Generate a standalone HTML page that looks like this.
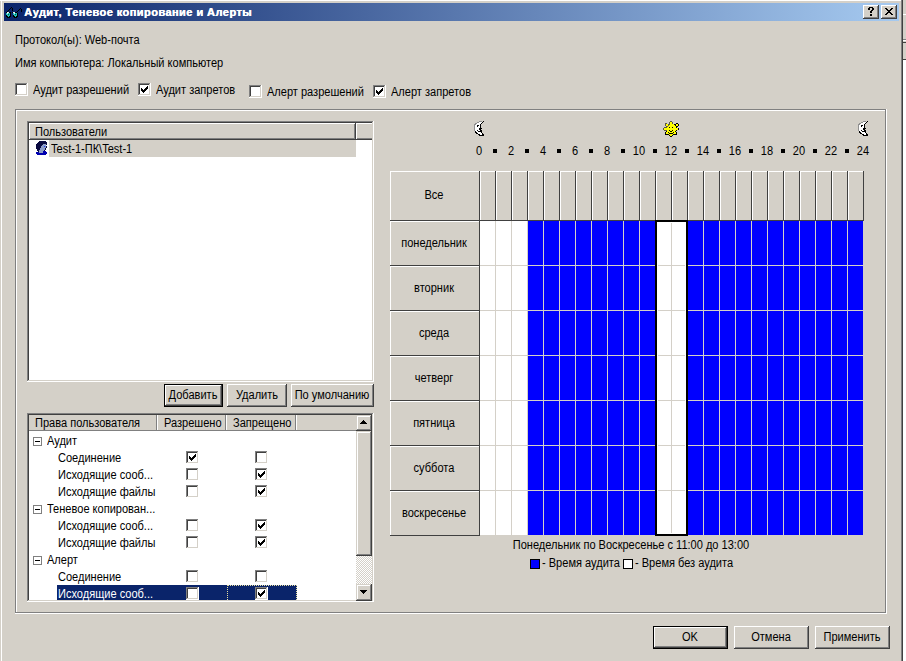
<!DOCTYPE html><html><head><meta charset="utf-8"><style>
html,body{margin:0;padding:0;}
body{width:906px;height:661px;overflow:hidden;position:relative;background:#d4d0c8;font-family:"Liberation Sans",sans-serif;font-size:11px;color:#000;}
.a{position:absolute;}
.t{position:absolute;white-space:nowrap;line-height:13px;font-size:12px;transform:scaleX(0.92);transform-origin:0 0;}
.c{transform-origin:200px 0;}
</style></head><body>
<div class="a" style="left:0px;top:0px;width:906px;height:661px;background:#d4d0c8;"></div>
<div class="a" style="left:0px;top:0px;width:901px;height:1px;background:#ffffff;"></div>
<div class="a" style="left:1px;top:0px;width:1px;height:661px;background:#ffffff;"></div>
<div class="a" style="left:901px;top:0px;width:1px;height:661px;background:#808080;"></div>
<div class="a" style="left:902px;top:0px;width:1px;height:661px;background:#404040;"></div>
<div class="a" style="left:903px;top:0px;width:3px;height:661px;background:#d4d0c8;"></div>
<div class="a" style="left:903px;top:14px;width:3px;height:1px;background:#ffffff;"></div>
<div class="a" style="left:903px;top:39px;width:3px;height:1px;background:#808080;"></div>
<div class="a" style="left:903px;top:40px;width:3px;height:1px;background:#ffffff;"></div>
<div class="a" style="left:903px;top:42px;width:3px;height:1px;background:#404040;"></div>
<div class="a" style="left:903px;top:59px;width:3px;height:1px;background:#404040;"></div>
<div class="a" style="left:903px;top:60px;width:3px;height:601px;background:#ffffff;"></div>
<div class="a" style="left:4px;top:3px;width:895px;height:18px;background:linear-gradient(to right,#0a246a,#a6caf0);"></div>
<svg class="a" style="left:6px;top:7px" width="16" height="11" shape-rendering="crispEdges"><rect x="5" y="0" width="1" height="1" fill="#000"/><rect x="4" y="1" width="1" height="1" fill="#000"/><rect x="6" y="1" width="1" height="1" fill="#000"/><rect x="14" y="1" width="1" height="1" fill="#000"/><rect x="3" y="2" width="1" height="1" fill="#000"/><rect x="6" y="2" width="1" height="1" fill="#000"/><rect x="13" y="2" width="1" height="1" fill="#000"/><rect x="15" y="2" width="1" height="1" fill="#000"/><rect x="2" y="3" width="1" height="1" fill="#000"/><rect x="6" y="3" width="1" height="1" fill="#000"/><rect x="12" y="3" width="1" height="1" fill="#000"/><rect x="15" y="3" width="1" height="1" fill="#000"/><rect x="1" y="4" width="1" height="1" fill="#000"/><rect x="11" y="4" width="1" height="1" fill="#000"/><rect x="15" y="4" width="1" height="1" fill="#000"/><rect x="0" y="5" width="1" height="1" fill="#000"/><rect x="1" y="5" width="1" height="1" fill="#e0f0f0"/><rect x="2" y="5" width="1" height="1" fill="#e0f0f0"/><rect x="3" y="5" width="1" height="1" fill="#000"/><rect x="4" y="5" width="1" height="1" fill="#000"/><rect x="6" y="5" width="1" height="1" fill="#000"/><rect x="7" y="5" width="1" height="1" fill="#e0f0f0"/><rect x="8" y="5" width="1" height="1" fill="#e0f0f0"/><rect x="9" y="5" width="1" height="1" fill="#000"/><rect x="10" y="5" width="1" height="1" fill="#000"/><rect x="0" y="6" width="1" height="1" fill="#20c0c0"/><rect x="1" y="6" width="1" height="1" fill="#e0f0f0"/><rect x="2" y="6" width="1" height="1" fill="#20c0c0"/><rect x="3" y="6" width="1" height="1" fill="#20c0c0"/><rect x="4" y="6" width="1" height="1" fill="#000"/><rect x="7" y="6" width="1" height="1" fill="#20c0c0"/><rect x="8" y="6" width="1" height="1" fill="#e0f0f0"/><rect x="9" y="6" width="1" height="1" fill="#20c0c0"/><rect x="10" y="6" width="1" height="1" fill="#20c0c0"/><rect x="11" y="6" width="1" height="1" fill="#000"/><rect x="0" y="7" width="1" height="1" fill="#20c0c0"/><rect x="1" y="7" width="1" height="1" fill="#20c0c0"/><rect x="2" y="7" width="1" height="1" fill="#006040"/><rect x="3" y="7" width="1" height="1" fill="#20c0c0"/><rect x="4" y="7" width="1" height="1" fill="#000"/><rect x="7" y="7" width="1" height="1" fill="#20c0c0"/><rect x="8" y="7" width="1" height="1" fill="#20c0c0"/><rect x="9" y="7" width="1" height="1" fill="#006040"/><rect x="10" y="7" width="1" height="1" fill="#20c0c0"/><rect x="11" y="7" width="1" height="1" fill="#000"/><rect x="0" y="8" width="1" height="1" fill="#000"/><rect x="1" y="8" width="1" height="1" fill="#20c0c0"/><rect x="2" y="8" width="1" height="1" fill="#20c0c0"/><rect x="3" y="8" width="1" height="1" fill="#20c0c0"/><rect x="4" y="8" width="1" height="1" fill="#000"/><rect x="7" y="8" width="1" height="1" fill="#000"/><rect x="8" y="8" width="1" height="1" fill="#20c0c0"/><rect x="9" y="8" width="1" height="1" fill="#20c0c0"/><rect x="10" y="8" width="1" height="1" fill="#20c0c0"/><rect x="11" y="8" width="1" height="1" fill="#000"/><rect x="0" y="9" width="1" height="1" fill="#000"/><rect x="1" y="9" width="1" height="1" fill="#000"/><rect x="2" y="9" width="1" height="1" fill="#20c0c0"/><rect x="3" y="9" width="1" height="1" fill="#000"/><rect x="4" y="9" width="1" height="1" fill="#000"/><rect x="7" y="9" width="1" height="1" fill="#000"/><rect x="8" y="9" width="1" height="1" fill="#000"/><rect x="9" y="9" width="1" height="1" fill="#20c0c0"/><rect x="10" y="9" width="1" height="1" fill="#000"/><rect x="11" y="9" width="1" height="1" fill="#000"/><rect x="1" y="10" width="1" height="1" fill="#000"/><rect x="2" y="10" width="1" height="1" fill="#000"/><rect x="3" y="10" width="1" height="1" fill="#000"/><rect x="8" y="10" width="1" height="1" fill="#000"/><rect x="9" y="10" width="1" height="1" fill="#000"/><rect x="10" y="10" width="1" height="1" fill="#000"/></svg>
<div class="t" style="left:24px;top:6px;color:#fff;font-weight:bold;letter-spacing:0.45px;text-shadow:0.5px 0 0 #fff;font-size:11px;transform:none;">Аудит, Теневое копирование и Алерты</div>
<div class="a" style="left:863px;top:5px;width:16px;height:14px;background:#d4d0c8;"></div>
<div class="a" style="left:863px;top:5px;width:16px;height:1px;background:#ffffff;"></div>
<div class="a" style="left:863px;top:5px;width:1px;height:14px;background:#ffffff;"></div>
<div class="a" style="left:863px;top:18px;width:16px;height:1px;background:#404040;"></div>
<div class="a" style="left:878px;top:5px;width:1px;height:14px;background:#404040;"></div>
<div class="a" style="left:864px;top:17px;width:14px;height:1px;background:#808080;"></div>
<div class="a" style="left:877px;top:6px;width:1px;height:12px;background:#808080;"></div>
<svg class="a" style="left:868px;top:7px" width="6" height="9" shape-rendering="crispEdges"><rect x="1" y="0" width="1" height="1" fill="#000"/><rect x="2" y="0" width="1" height="1" fill="#000"/><rect x="3" y="0" width="1" height="1" fill="#000"/><rect x="4" y="0" width="1" height="1" fill="#000"/><rect x="0" y="1" width="1" height="1" fill="#000"/><rect x="1" y="1" width="1" height="1" fill="#000"/><rect x="4" y="1" width="1" height="1" fill="#000"/><rect x="5" y="1" width="1" height="1" fill="#000"/><rect x="0" y="2" width="1" height="1" fill="#000"/><rect x="1" y="2" width="1" height="1" fill="#000"/><rect x="4" y="2" width="1" height="1" fill="#000"/><rect x="5" y="2" width="1" height="1" fill="#000"/><rect x="3" y="3" width="1" height="1" fill="#000"/><rect x="4" y="3" width="1" height="1" fill="#000"/><rect x="2" y="4" width="1" height="1" fill="#000"/><rect x="3" y="4" width="1" height="1" fill="#000"/><rect x="2" y="5" width="1" height="1" fill="#000"/><rect x="3" y="5" width="1" height="1" fill="#000"/><rect x="2" y="7" width="1" height="1" fill="#000"/><rect x="3" y="7" width="1" height="1" fill="#000"/><rect x="2" y="8" width="1" height="1" fill="#000"/><rect x="3" y="8" width="1" height="1" fill="#000"/></svg>
<div class="a" style="left:881px;top:5px;width:16px;height:14px;background:#d4d0c8;"></div>
<div class="a" style="left:881px;top:5px;width:16px;height:1px;background:#ffffff;"></div>
<div class="a" style="left:881px;top:5px;width:1px;height:14px;background:#ffffff;"></div>
<div class="a" style="left:881px;top:18px;width:16px;height:1px;background:#404040;"></div>
<div class="a" style="left:896px;top:5px;width:1px;height:14px;background:#404040;"></div>
<div class="a" style="left:882px;top:17px;width:14px;height:1px;background:#808080;"></div>
<div class="a" style="left:895px;top:6px;width:1px;height:12px;background:#808080;"></div>
<svg class="a" style="left:885px;top:8px" width="8" height="7" shape-rendering="crispEdges" fill="#000"><rect x="0" y="0" width="2" height="1"/><rect x="6" y="0" width="2" height="1"/><rect x="1" y="1" width="2" height="1"/><rect x="5" y="1" width="2" height="1"/><rect x="2" y="2" width="2" height="1"/><rect x="4" y="2" width="2" height="1"/><rect x="3" y="3" width="2" height="1"/><rect x="3" y="3" width="2" height="1"/><rect x="4" y="4" width="2" height="1"/><rect x="2" y="4" width="2" height="1"/><rect x="5" y="5" width="2" height="1"/><rect x="1" y="5" width="2" height="1"/><rect x="6" y="6" width="2" height="1"/><rect x="0" y="6" width="2" height="1"/></svg>
<div class="t" style="left:15px;top:34px;">Протокол(ы): Web-почта</div>
<div class="t" style="left:15px;top:57px;">Имя компьютера: Локальный компьютер</div>
<div class="a" style="left:15px;top:83px;width:13px;height:13px;background:#ffffff;"></div>
<div class="a" style="left:15px;top:83px;width:13px;height:1px;background:#808080;"></div>
<div class="a" style="left:15px;top:83px;width:1px;height:13px;background:#808080;"></div>
<div class="a" style="left:15px;top:95px;width:13px;height:1px;background:#ffffff;"></div>
<div class="a" style="left:27px;top:83px;width:1px;height:13px;background:#ffffff;"></div>
<div class="a" style="left:16px;top:84px;width:11px;height:1px;background:#404040;"></div>
<div class="a" style="left:16px;top:84px;width:1px;height:11px;background:#404040;"></div>
<div class="a" style="left:16px;top:94px;width:11px;height:1px;background:#d4d0c8;"></div>
<div class="a" style="left:26px;top:84px;width:1px;height:11px;background:#d4d0c8;"></div>
<div class="t" style="left:33px;top:84px;">Аудит разрешений</div>
<div class="a" style="left:138px;top:83px;width:13px;height:13px;background:#ffffff;"></div>
<div class="a" style="left:138px;top:83px;width:13px;height:1px;background:#808080;"></div>
<div class="a" style="left:138px;top:83px;width:1px;height:13px;background:#808080;"></div>
<div class="a" style="left:138px;top:95px;width:13px;height:1px;background:#ffffff;"></div>
<div class="a" style="left:150px;top:83px;width:1px;height:13px;background:#ffffff;"></div>
<div class="a" style="left:139px;top:84px;width:11px;height:1px;background:#404040;"></div>
<div class="a" style="left:139px;top:84px;width:1px;height:11px;background:#404040;"></div>
<div class="a" style="left:139px;top:94px;width:11px;height:1px;background:#d4d0c8;"></div>
<div class="a" style="left:149px;top:84px;width:1px;height:11px;background:#d4d0c8;"></div>
<svg class="a" style="left:141px;top:86px" width="7" height="7" shape-rendering="crispEdges" fill="#000"><rect x="6" y="0" width="1" height="1"/><rect x="5" y="1" width="1" height="1"/><rect x="6" y="1" width="1" height="1"/><rect x="0" y="2" width="1" height="1"/><rect x="4" y="2" width="1" height="1"/><rect x="5" y="2" width="1" height="1"/><rect x="6" y="2" width="1" height="1"/><rect x="0" y="3" width="1" height="1"/><rect x="1" y="3" width="1" height="1"/><rect x="3" y="3" width="1" height="1"/><rect x="4" y="3" width="1" height="1"/><rect x="5" y="3" width="1" height="1"/><rect x="0" y="4" width="1" height="1"/><rect x="1" y="4" width="1" height="1"/><rect x="2" y="4" width="1" height="1"/><rect x="3" y="4" width="1" height="1"/><rect x="4" y="4" width="1" height="1"/><rect x="1" y="5" width="1" height="1"/><rect x="2" y="5" width="1" height="1"/><rect x="3" y="5" width="1" height="1"/><rect x="2" y="6" width="1" height="1"/></svg>
<div class="t" style="left:156px;top:84px;">Аудит запретов</div>
<div class="a" style="left:249px;top:85px;width:13px;height:13px;background:#ffffff;"></div>
<div class="a" style="left:249px;top:85px;width:13px;height:1px;background:#808080;"></div>
<div class="a" style="left:249px;top:85px;width:1px;height:13px;background:#808080;"></div>
<div class="a" style="left:249px;top:97px;width:13px;height:1px;background:#ffffff;"></div>
<div class="a" style="left:261px;top:85px;width:1px;height:13px;background:#ffffff;"></div>
<div class="a" style="left:250px;top:86px;width:11px;height:1px;background:#404040;"></div>
<div class="a" style="left:250px;top:86px;width:1px;height:11px;background:#404040;"></div>
<div class="a" style="left:250px;top:96px;width:11px;height:1px;background:#d4d0c8;"></div>
<div class="a" style="left:260px;top:86px;width:1px;height:11px;background:#d4d0c8;"></div>
<div class="t" style="left:267px;top:86px;">Алерт разрешений</div>
<div class="a" style="left:373px;top:85px;width:13px;height:13px;background:#ffffff;"></div>
<div class="a" style="left:373px;top:85px;width:13px;height:1px;background:#808080;"></div>
<div class="a" style="left:373px;top:85px;width:1px;height:13px;background:#808080;"></div>
<div class="a" style="left:373px;top:97px;width:13px;height:1px;background:#ffffff;"></div>
<div class="a" style="left:385px;top:85px;width:1px;height:13px;background:#ffffff;"></div>
<div class="a" style="left:374px;top:86px;width:11px;height:1px;background:#404040;"></div>
<div class="a" style="left:374px;top:86px;width:1px;height:11px;background:#404040;"></div>
<div class="a" style="left:374px;top:96px;width:11px;height:1px;background:#d4d0c8;"></div>
<div class="a" style="left:384px;top:86px;width:1px;height:11px;background:#d4d0c8;"></div>
<svg class="a" style="left:376px;top:88px" width="7" height="7" shape-rendering="crispEdges" fill="#000"><rect x="6" y="0" width="1" height="1"/><rect x="5" y="1" width="1" height="1"/><rect x="6" y="1" width="1" height="1"/><rect x="0" y="2" width="1" height="1"/><rect x="4" y="2" width="1" height="1"/><rect x="5" y="2" width="1" height="1"/><rect x="6" y="2" width="1" height="1"/><rect x="0" y="3" width="1" height="1"/><rect x="1" y="3" width="1" height="1"/><rect x="3" y="3" width="1" height="1"/><rect x="4" y="3" width="1" height="1"/><rect x="5" y="3" width="1" height="1"/><rect x="0" y="4" width="1" height="1"/><rect x="1" y="4" width="1" height="1"/><rect x="2" y="4" width="1" height="1"/><rect x="3" y="4" width="1" height="1"/><rect x="4" y="4" width="1" height="1"/><rect x="1" y="5" width="1" height="1"/><rect x="2" y="5" width="1" height="1"/><rect x="3" y="5" width="1" height="1"/><rect x="2" y="6" width="1" height="1"/></svg>
<div class="t" style="left:391px;top:86px;">Алерт запретов</div>
<div class="a" style="left:15px;top:109px;width:871px;height:1px;background:#808080;"></div>
<div class="a" style="left:15px;top:109px;width:1px;height:504px;background:#808080;"></div>
<div class="a" style="left:15px;top:612px;width:871px;height:1px;background:#808080;"></div>
<div class="a" style="left:885px;top:109px;width:1px;height:504px;background:#808080;"></div>
<div class="a" style="left:16px;top:110px;width:869px;height:1px;background:#ffffff;"></div>
<div class="a" style="left:16px;top:110px;width:1px;height:502px;background:#ffffff;"></div>
<div class="a" style="left:15px;top:613px;width:872px;height:1px;background:#ffffff;"></div>
<div class="a" style="left:886px;top:109px;width:1px;height:505px;background:#ffffff;"></div>
<div class="a" style="left:27px;top:121px;width:347px;height:261px;background:#ffffff;"></div>
<div class="a" style="left:27px;top:121px;width:347px;height:1px;background:#808080;"></div>
<div class="a" style="left:27px;top:121px;width:1px;height:261px;background:#808080;"></div>
<div class="a" style="left:27px;top:381px;width:347px;height:1px;background:#ffffff;"></div>
<div class="a" style="left:373px;top:121px;width:1px;height:261px;background:#ffffff;"></div>
<div class="a" style="left:28px;top:122px;width:345px;height:1px;background:#404040;"></div>
<div class="a" style="left:28px;top:122px;width:1px;height:259px;background:#404040;"></div>
<div class="a" style="left:28px;top:380px;width:345px;height:1px;background:#d4d0c8;"></div>
<div class="a" style="left:372px;top:122px;width:1px;height:259px;background:#d4d0c8;"></div>
<div class="a" style="left:29px;top:123px;width:327px;height:17px;background:#d4d0c8;"></div>
<div class="a" style="left:29px;top:123px;width:327px;height:1px;background:#ffffff;"></div>
<div class="a" style="left:29px;top:123px;width:1px;height:17px;background:#ffffff;"></div>
<div class="a" style="left:29px;top:139px;width:327px;height:1px;background:#404040;"></div>
<div class="a" style="left:355px;top:123px;width:1px;height:17px;background:#404040;"></div>
<div class="a" style="left:30px;top:138px;width:325px;height:1px;background:#808080;"></div>
<div class="a" style="left:354px;top:124px;width:1px;height:15px;background:#808080;"></div>
<div class="a" style="left:356px;top:123px;width:16px;height:17px;background:#d4d0c8;"></div>
<div class="a" style="left:356px;top:123px;width:16px;height:1px;background:#ffffff;"></div>
<div class="a" style="left:356px;top:123px;width:1px;height:17px;background:#ffffff;"></div>
<div class="a" style="left:356px;top:139px;width:16px;height:1px;background:#404040;"></div>
<div class="a" style="left:357px;top:138px;width:15px;height:1px;background:#808080;"></div>
<div class="t" style="left:35px;top:126px;">Пользователи</div>
<div class="a" style="left:49px;top:140px;width:307px;height:17px;background:#d4d0c8;"></div>
<svg class="a" style="left:36px;top:141px" width="11" height="14" shape-rendering="crispEdges"><rect x="3" y="0" width="1" height="1" fill="#0a0a40"/><rect x="4" y="0" width="1" height="1" fill="#0a0a40"/><rect x="5" y="0" width="1" height="1" fill="#0a0a40"/><rect x="6" y="0" width="1" height="1" fill="#0a0a40"/><rect x="7" y="0" width="1" height="1" fill="#0a0a40"/><rect x="8" y="0" width="1" height="1" fill="#0a0a40"/><rect x="9" y="0" width="1" height="1" fill="#0a0a40"/><rect x="2" y="1" width="1" height="1" fill="#0a0a40"/><rect x="3" y="1" width="1" height="1" fill="#0a0a40"/><rect x="4" y="1" width="1" height="1" fill="#0a0a40"/><rect x="5" y="1" width="1" height="1" fill="#0a0a40"/><rect x="6" y="1" width="1" height="1" fill="#0a0a40"/><rect x="7" y="1" width="1" height="1" fill="#0a0a40"/><rect x="8" y="1" width="1" height="1" fill="#0a0a40"/><rect x="9" y="1" width="1" height="1" fill="#0a0a40"/><rect x="10" y="1" width="1" height="1" fill="#0a0a40"/><rect x="1" y="2" width="1" height="1" fill="#0a0a40"/><rect x="2" y="2" width="1" height="1" fill="#0a0a40"/><rect x="3" y="2" width="1" height="1" fill="#0a0a40"/><rect x="4" y="2" width="1" height="1" fill="#0a0a40"/><rect x="5" y="2" width="1" height="1" fill="#0a0a40"/><rect x="6" y="2" width="1" height="1" fill="#0a0a40"/><rect x="7" y="2" width="1" height="1" fill="#0a0a40"/><rect x="8" y="2" width="1" height="1" fill="#0a0a40"/><rect x="9" y="2" width="1" height="1" fill="#0a0a40"/><rect x="10" y="2" width="1" height="1" fill="#0a0a40"/><rect x="0" y="3" width="1" height="1" fill="#0a0a40"/><rect x="1" y="3" width="1" height="1" fill="#0a0a40"/><rect x="2" y="3" width="1" height="1" fill="#0a0a40"/><rect x="3" y="3" width="1" height="1" fill="#0a0a40"/><rect x="4" y="3" width="1" height="1" fill="#0a0a40"/><rect x="5" y="3" width="1" height="1" fill="#0a0a40"/><rect x="6" y="3" width="1" height="1" fill="#0a0a40"/><rect x="7" y="3" width="1" height="1" fill="#8c9cc8"/><rect x="8" y="3" width="1" height="1" fill="#8c9cc8"/><rect x="9" y="3" width="1" height="1" fill="#8c9cc8"/><rect x="10" y="3" width="1" height="1" fill="#0a0a40"/><rect x="0" y="4" width="1" height="1" fill="#0a0a40"/><rect x="1" y="4" width="1" height="1" fill="#0a0a40"/><rect x="2" y="4" width="1" height="1" fill="#0a0a40"/><rect x="3" y="4" width="1" height="1" fill="#0a0a40"/><rect x="4" y="4" width="1" height="1" fill="#0a0a40"/><rect x="5" y="4" width="1" height="1" fill="#0a0a40"/><rect x="6" y="4" width="1" height="1" fill="#8c9cc8"/><rect x="7" y="4" width="1" height="1" fill="#8c9cc8"/><rect x="8" y="4" width="1" height="1" fill="#8c9cc8"/><rect x="9" y="4" width="1" height="1" fill="#8c9cc8"/><rect x="0" y="5" width="1" height="1" fill="#0a0a40"/><rect x="1" y="5" width="1" height="1" fill="#0a0a40"/><rect x="2" y="5" width="1" height="1" fill="#0a0a40"/><rect x="3" y="5" width="1" height="1" fill="#0a0a40"/><rect x="4" y="5" width="1" height="1" fill="#0a0a40"/><rect x="5" y="5" width="1" height="1" fill="#8c9cc8"/><rect x="6" y="5" width="1" height="1" fill="#8c9cc8"/><rect x="7" y="5" width="1" height="1" fill="#8c9cc8"/><rect x="8" y="5" width="1" height="1" fill="#1030ff"/><rect x="9" y="5" width="1" height="1" fill="#8c9cc8"/><rect x="10" y="5" width="1" height="1" fill="#0a0a40"/><rect x="0" y="6" width="1" height="1" fill="#0a0a40"/><rect x="1" y="6" width="1" height="1" fill="#0a0a40"/><rect x="2" y="6" width="1" height="1" fill="#0a0a40"/><rect x="3" y="6" width="1" height="1" fill="#0a0a40"/><rect x="4" y="6" width="1" height="1" fill="#0a0a40"/><rect x="5" y="6" width="1" height="1" fill="#8c9cc8"/><rect x="6" y="6" width="1" height="1" fill="#8c9cc8"/><rect x="7" y="6" width="1" height="1" fill="#8c9cc8"/><rect x="8" y="6" width="1" height="1" fill="#8c9cc8"/><rect x="9" y="6" width="1" height="1" fill="#8c9cc8"/><rect x="10" y="6" width="1" height="1" fill="#0a0a40"/><rect x="0" y="7" width="1" height="1" fill="#0a0a40"/><rect x="1" y="7" width="1" height="1" fill="#0a0a40"/><rect x="2" y="7" width="1" height="1" fill="#0a0a40"/><rect x="3" y="7" width="1" height="1" fill="#0a0a40"/><rect x="4" y="7" width="1" height="1" fill="#8c9cc8"/><rect x="5" y="7" width="1" height="1" fill="#8c9cc8"/><rect x="6" y="7" width="1" height="1" fill="#8c9cc8"/><rect x="7" y="7" width="1" height="1" fill="#8c9cc8"/><rect x="8" y="7" width="1" height="1" fill="#8c9cc8"/><rect x="9" y="7" width="1" height="1" fill="#0a0a40"/><rect x="1" y="8" width="1" height="1" fill="#0a0a40"/><rect x="2" y="8" width="1" height="1" fill="#0a0a40"/><rect x="3" y="8" width="1" height="1" fill="#0a0a40"/><rect x="4" y="8" width="1" height="1" fill="#8c9cc8"/><rect x="5" y="8" width="1" height="1" fill="#8c9cc8"/><rect x="6" y="8" width="1" height="1" fill="#8c9cc8"/><rect x="7" y="8" width="1" height="1" fill="#8c9cc8"/><rect x="8" y="8" width="1" height="1" fill="#8c9cc8"/><rect x="9" y="8" width="1" height="1" fill="#0a0a40"/><rect x="1" y="9" width="1" height="1" fill="#0a0a40"/><rect x="2" y="9" width="1" height="1" fill="#0a0a40"/><rect x="3" y="9" width="1" height="1" fill="#8c9cc8"/><rect x="4" y="9" width="1" height="1" fill="#8c9cc8"/><rect x="5" y="9" width="1" height="1" fill="#8c9cc8"/><rect x="6" y="9" width="1" height="1" fill="#8c9cc8"/><rect x="7" y="9" width="1" height="1" fill="#8c9cc8"/><rect x="8" y="9" width="1" height="1" fill="#0a0a40"/><rect x="2" y="10" width="1" height="1" fill="#0a0a40"/><rect x="3" y="10" width="1" height="1" fill="#8c9cc8"/><rect x="4" y="10" width="1" height="1" fill="#8c9cc8"/><rect x="5" y="10" width="1" height="1" fill="#8c9cc8"/><rect x="6" y="10" width="1" height="1" fill="#8c9cc8"/><rect x="7" y="10" width="1" height="1" fill="#0000b0"/><rect x="8" y="10" width="1" height="1" fill="#0000b0"/><rect x="9" y="10" width="1" height="1" fill="#0000b0"/><rect x="0" y="11" width="1" height="1" fill="#0000b0"/><rect x="1" y="11" width="1" height="1" fill="#0000b0"/><rect x="2" y="11" width="1" height="1" fill="#0000b0"/><rect x="3" y="11" width="1" height="1" fill="#8c9cc8"/><rect x="4" y="11" width="1" height="1" fill="#8c9cc8"/><rect x="5" y="11" width="1" height="1" fill="#8c9cc8"/><rect x="6" y="11" width="1" height="1" fill="#8c9cc8"/><rect x="7" y="11" width="1" height="1" fill="#0000b0"/><rect x="8" y="11" width="1" height="1" fill="#0000b0"/><rect x="9" y="11" width="1" height="1" fill="#0000b0"/><rect x="10" y="11" width="1" height="1" fill="#0000b0"/><rect x="0" y="12" width="1" height="1" fill="#0000b0"/><rect x="1" y="12" width="1" height="1" fill="#0000b0"/><rect x="2" y="12" width="1" height="1" fill="#0000b0"/><rect x="3" y="12" width="1" height="1" fill="#0000b0"/><rect x="4" y="12" width="1" height="1" fill="#0000b0"/><rect x="5" y="12" width="1" height="1" fill="#0000b0"/><rect x="6" y="12" width="1" height="1" fill="#0000b0"/><rect x="7" y="12" width="1" height="1" fill="#0000b0"/><rect x="8" y="12" width="1" height="1" fill="#0000b0"/><rect x="9" y="12" width="1" height="1" fill="#0000b0"/><rect x="10" y="12" width="1" height="1" fill="#0000b0"/><rect x="1" y="13" width="1" height="1" fill="#0000b0"/><rect x="2" y="13" width="1" height="1" fill="#0000b0"/><rect x="3" y="13" width="1" height="1" fill="#0000b0"/><rect x="4" y="13" width="1" height="1" fill="#0000b0"/><rect x="5" y="13" width="1" height="1" fill="#0000b0"/><rect x="6" y="13" width="1" height="1" fill="#0000b0"/><rect x="7" y="13" width="1" height="1" fill="#0000b0"/><rect x="8" y="13" width="1" height="1" fill="#0000b0"/><rect x="9" y="13" width="1" height="1" fill="#0000b0"/></svg>
<div class="t" style="left:51px;top:143px;">Test-1-ПК\Test-1</div>
<div class="a" style="left:164px;top:384px;width:59px;height:23px;background:#000;"></div>
<div class="a" style="left:165px;top:385px;width:57px;height:21px;background:#d4d0c8;"></div>
<div class="a" style="left:165px;top:385px;width:57px;height:1px;background:#ffffff;"></div>
<div class="a" style="left:165px;top:385px;width:1px;height:21px;background:#ffffff;"></div>
<div class="a" style="left:165px;top:405px;width:57px;height:1px;background:#404040;"></div>
<div class="a" style="left:221px;top:385px;width:1px;height:21px;background:#404040;"></div>
<div class="a" style="left:166px;top:404px;width:55px;height:1px;background:#808080;"></div>
<div class="a" style="left:220px;top:386px;width:1px;height:19px;background:#808080;"></div>
<div class="t c" style="left:-7px;width:400px;text-align:center;top:389px;">Добавить</div>
<div class="a" style="left:227px;top:384px;width:60px;height:23px;background:#d4d0c8;"></div>
<div class="a" style="left:227px;top:384px;width:60px;height:1px;background:#ffffff;"></div>
<div class="a" style="left:227px;top:384px;width:1px;height:23px;background:#ffffff;"></div>
<div class="a" style="left:227px;top:406px;width:60px;height:1px;background:#404040;"></div>
<div class="a" style="left:286px;top:384px;width:1px;height:23px;background:#404040;"></div>
<div class="a" style="left:228px;top:405px;width:58px;height:1px;background:#808080;"></div>
<div class="a" style="left:285px;top:385px;width:1px;height:21px;background:#808080;"></div>
<div class="t c" style="left:57px;width:400px;text-align:center;top:389px;">Удалить</div>
<div class="a" style="left:291px;top:384px;width:83px;height:23px;background:#d4d0c8;"></div>
<div class="a" style="left:291px;top:384px;width:83px;height:1px;background:#ffffff;"></div>
<div class="a" style="left:291px;top:384px;width:1px;height:23px;background:#ffffff;"></div>
<div class="a" style="left:291px;top:406px;width:83px;height:1px;background:#404040;"></div>
<div class="a" style="left:373px;top:384px;width:1px;height:23px;background:#404040;"></div>
<div class="a" style="left:292px;top:405px;width:81px;height:1px;background:#808080;"></div>
<div class="a" style="left:372px;top:385px;width:1px;height:21px;background:#808080;"></div>
<div class="t c" style="left:132px;width:400px;text-align:center;top:389px;">По умолчанию</div>
<div class="a" style="left:27px;top:413px;width:347px;height:189px;background:#ffffff;"></div>
<div class="a" style="left:27px;top:413px;width:347px;height:1px;background:#808080;"></div>
<div class="a" style="left:27px;top:413px;width:1px;height:189px;background:#808080;"></div>
<div class="a" style="left:27px;top:601px;width:347px;height:1px;background:#ffffff;"></div>
<div class="a" style="left:373px;top:413px;width:1px;height:189px;background:#ffffff;"></div>
<div class="a" style="left:28px;top:414px;width:345px;height:1px;background:#404040;"></div>
<div class="a" style="left:28px;top:414px;width:1px;height:187px;background:#404040;"></div>
<div class="a" style="left:28px;top:600px;width:345px;height:1px;background:#d4d0c8;"></div>
<div class="a" style="left:372px;top:414px;width:1px;height:187px;background:#d4d0c8;"></div>
<div class="a" style="left:29px;top:415px;width:128px;height:16px;background:#d4d0c8;"></div>
<div class="a" style="left:29px;top:430px;width:128px;height:1px;background:#808080;"></div>
<div class="a" style="left:156px;top:415px;width:1px;height:16px;background:#808080;"></div>
<div class="a" style="left:157px;top:415px;width:69px;height:16px;background:#d4d0c8;"></div>
<div class="a" style="left:157px;top:415px;width:1px;height:15px;background:#ffffff;"></div>
<div class="a" style="left:157px;top:430px;width:69px;height:1px;background:#808080;"></div>
<div class="a" style="left:225px;top:415px;width:1px;height:16px;background:#808080;"></div>
<div class="a" style="left:226px;top:415px;width:70px;height:16px;background:#d4d0c8;"></div>
<div class="a" style="left:226px;top:415px;width:1px;height:15px;background:#ffffff;"></div>
<div class="a" style="left:226px;top:430px;width:70px;height:1px;background:#808080;"></div>
<div class="a" style="left:295px;top:415px;width:1px;height:16px;background:#808080;"></div>
<div class="a" style="left:296px;top:415px;width:60px;height:16px;background:#d4d0c8;"></div>
<div class="a" style="left:296px;top:415px;width:1px;height:15px;background:#ffffff;"></div>
<div class="a" style="left:296px;top:430px;width:60px;height:1px;background:#808080;"></div>
<div class="t" style="left:35px;top:417px;">Права пользователя</div>
<div class="t" style="left:164px;top:417px;">Разрешено</div>
<div class="t" style="left:233px;top:417px;">Запрещено</div>
<div class="a" style="left:356px;top:415px;width:16px;height:16px;background:#d4d0c8;"></div>
<div class="a" style="left:357px;top:416px;width:14px;height:1px;background:#ffffff;"></div>
<div class="a" style="left:357px;top:416px;width:1px;height:14px;background:#ffffff;"></div>
<div class="a" style="left:356px;top:430px;width:16px;height:1px;background:#404040;"></div>
<div class="a" style="left:371px;top:415px;width:1px;height:16px;background:#404040;"></div>
<div class="a" style="left:357px;top:429px;width:14px;height:1px;background:#808080;"></div>
<div class="a" style="left:370px;top:416px;width:1px;height:14px;background:#808080;"></div>
<svg class="a" style="left:360px;top:420px" width="7" height="4" shape-rendering="crispEdges"><path d="M3 0h1v1h1v1h1v1h1v1h-7v-1h1v-1h1v-1h1z" fill="#000"/></svg>
<div class="a" style="left:356px;top:431px;width:16px;height:125px;background:#d4d0c8;"></div>
<div class="a" style="left:357px;top:432px;width:14px;height:1px;background:#ffffff;"></div>
<div class="a" style="left:357px;top:432px;width:1px;height:123px;background:#ffffff;"></div>
<div class="a" style="left:356px;top:555px;width:16px;height:1px;background:#404040;"></div>
<div class="a" style="left:371px;top:431px;width:1px;height:125px;background:#404040;"></div>
<div class="a" style="left:357px;top:554px;width:14px;height:1px;background:#808080;"></div>
<div class="a" style="left:370px;top:432px;width:1px;height:123px;background:#808080;"></div>
<div class="a" style="left:356px;top:556px;width:16px;height:28px;background-color:#fff;background-image:repeating-conic-gradient(#d4d0c8 0 25%,#fff 0 50%);background-size:2px 2px;"></div>
<div class="a" style="left:356px;top:584px;width:16px;height:17px;background:#d4d0c8;"></div>
<div class="a" style="left:357px;top:585px;width:14px;height:1px;background:#ffffff;"></div>
<div class="a" style="left:357px;top:585px;width:1px;height:15px;background:#ffffff;"></div>
<div class="a" style="left:356px;top:600px;width:16px;height:1px;background:#404040;"></div>
<div class="a" style="left:371px;top:584px;width:1px;height:17px;background:#404040;"></div>
<div class="a" style="left:357px;top:599px;width:14px;height:1px;background:#808080;"></div>
<div class="a" style="left:370px;top:585px;width:1px;height:15px;background:#808080;"></div>
<svg class="a" style="left:360px;top:590px" width="7" height="4" shape-rendering="crispEdges"><path d="M0 0h7v1h-1v1h-1v1h-1v1h-1v-1h-1v-1h-1v-1h-1z" fill="#000"/></svg>
<div class="a" style="left:33px;top:437px;width:9px;height:9px;background:#fff;box-sizing:border-box;border:1px solid #808080;"></div>
<div class="a" style="left:35px;top:441px;width:5px;height:1px;background:#000;"></div>
<div class="t" style="left:47px;top:435px;">Аудит</div>
<div class="t" style="left:58px;top:452px;">Соединение</div>
<div class="a" style="left:186px;top:451px;width:13px;height:13px;background:#ffffff;"></div>
<div class="a" style="left:186px;top:451px;width:13px;height:1px;background:#808080;"></div>
<div class="a" style="left:186px;top:451px;width:1px;height:13px;background:#808080;"></div>
<div class="a" style="left:186px;top:463px;width:13px;height:1px;background:#ffffff;"></div>
<div class="a" style="left:198px;top:451px;width:1px;height:13px;background:#ffffff;"></div>
<div class="a" style="left:187px;top:452px;width:11px;height:1px;background:#404040;"></div>
<div class="a" style="left:187px;top:452px;width:1px;height:11px;background:#404040;"></div>
<div class="a" style="left:187px;top:462px;width:11px;height:1px;background:#d4d0c8;"></div>
<div class="a" style="left:197px;top:452px;width:1px;height:11px;background:#d4d0c8;"></div>
<svg class="a" style="left:189px;top:454px" width="7" height="7" shape-rendering="crispEdges" fill="#000"><rect x="6" y="0" width="1" height="1"/><rect x="5" y="1" width="1" height="1"/><rect x="6" y="1" width="1" height="1"/><rect x="0" y="2" width="1" height="1"/><rect x="4" y="2" width="1" height="1"/><rect x="5" y="2" width="1" height="1"/><rect x="6" y="2" width="1" height="1"/><rect x="0" y="3" width="1" height="1"/><rect x="1" y="3" width="1" height="1"/><rect x="3" y="3" width="1" height="1"/><rect x="4" y="3" width="1" height="1"/><rect x="5" y="3" width="1" height="1"/><rect x="0" y="4" width="1" height="1"/><rect x="1" y="4" width="1" height="1"/><rect x="2" y="4" width="1" height="1"/><rect x="3" y="4" width="1" height="1"/><rect x="4" y="4" width="1" height="1"/><rect x="1" y="5" width="1" height="1"/><rect x="2" y="5" width="1" height="1"/><rect x="3" y="5" width="1" height="1"/><rect x="2" y="6" width="1" height="1"/></svg>
<div class="a" style="left:255px;top:451px;width:13px;height:13px;background:#ffffff;"></div>
<div class="a" style="left:255px;top:451px;width:13px;height:1px;background:#808080;"></div>
<div class="a" style="left:255px;top:451px;width:1px;height:13px;background:#808080;"></div>
<div class="a" style="left:255px;top:463px;width:13px;height:1px;background:#ffffff;"></div>
<div class="a" style="left:267px;top:451px;width:1px;height:13px;background:#ffffff;"></div>
<div class="a" style="left:256px;top:452px;width:11px;height:1px;background:#404040;"></div>
<div class="a" style="left:256px;top:452px;width:1px;height:11px;background:#404040;"></div>
<div class="a" style="left:256px;top:462px;width:11px;height:1px;background:#d4d0c8;"></div>
<div class="a" style="left:266px;top:452px;width:1px;height:11px;background:#d4d0c8;"></div>
<div class="t" style="left:58px;top:469px;">Исходящие сооб...</div>
<div class="a" style="left:186px;top:468px;width:13px;height:13px;background:#ffffff;"></div>
<div class="a" style="left:186px;top:468px;width:13px;height:1px;background:#808080;"></div>
<div class="a" style="left:186px;top:468px;width:1px;height:13px;background:#808080;"></div>
<div class="a" style="left:186px;top:480px;width:13px;height:1px;background:#ffffff;"></div>
<div class="a" style="left:198px;top:468px;width:1px;height:13px;background:#ffffff;"></div>
<div class="a" style="left:187px;top:469px;width:11px;height:1px;background:#404040;"></div>
<div class="a" style="left:187px;top:469px;width:1px;height:11px;background:#404040;"></div>
<div class="a" style="left:187px;top:479px;width:11px;height:1px;background:#d4d0c8;"></div>
<div class="a" style="left:197px;top:469px;width:1px;height:11px;background:#d4d0c8;"></div>
<div class="a" style="left:255px;top:468px;width:13px;height:13px;background:#ffffff;"></div>
<div class="a" style="left:255px;top:468px;width:13px;height:1px;background:#808080;"></div>
<div class="a" style="left:255px;top:468px;width:1px;height:13px;background:#808080;"></div>
<div class="a" style="left:255px;top:480px;width:13px;height:1px;background:#ffffff;"></div>
<div class="a" style="left:267px;top:468px;width:1px;height:13px;background:#ffffff;"></div>
<div class="a" style="left:256px;top:469px;width:11px;height:1px;background:#404040;"></div>
<div class="a" style="left:256px;top:469px;width:1px;height:11px;background:#404040;"></div>
<div class="a" style="left:256px;top:479px;width:11px;height:1px;background:#d4d0c8;"></div>
<div class="a" style="left:266px;top:469px;width:1px;height:11px;background:#d4d0c8;"></div>
<svg class="a" style="left:258px;top:471px" width="7" height="7" shape-rendering="crispEdges" fill="#000"><rect x="6" y="0" width="1" height="1"/><rect x="5" y="1" width="1" height="1"/><rect x="6" y="1" width="1" height="1"/><rect x="0" y="2" width="1" height="1"/><rect x="4" y="2" width="1" height="1"/><rect x="5" y="2" width="1" height="1"/><rect x="6" y="2" width="1" height="1"/><rect x="0" y="3" width="1" height="1"/><rect x="1" y="3" width="1" height="1"/><rect x="3" y="3" width="1" height="1"/><rect x="4" y="3" width="1" height="1"/><rect x="5" y="3" width="1" height="1"/><rect x="0" y="4" width="1" height="1"/><rect x="1" y="4" width="1" height="1"/><rect x="2" y="4" width="1" height="1"/><rect x="3" y="4" width="1" height="1"/><rect x="4" y="4" width="1" height="1"/><rect x="1" y="5" width="1" height="1"/><rect x="2" y="5" width="1" height="1"/><rect x="3" y="5" width="1" height="1"/><rect x="2" y="6" width="1" height="1"/></svg>
<div class="t" style="left:58px;top:486px;">Исходящие файлы</div>
<div class="a" style="left:186px;top:485px;width:13px;height:13px;background:#ffffff;"></div>
<div class="a" style="left:186px;top:485px;width:13px;height:1px;background:#808080;"></div>
<div class="a" style="left:186px;top:485px;width:1px;height:13px;background:#808080;"></div>
<div class="a" style="left:186px;top:497px;width:13px;height:1px;background:#ffffff;"></div>
<div class="a" style="left:198px;top:485px;width:1px;height:13px;background:#ffffff;"></div>
<div class="a" style="left:187px;top:486px;width:11px;height:1px;background:#404040;"></div>
<div class="a" style="left:187px;top:486px;width:1px;height:11px;background:#404040;"></div>
<div class="a" style="left:187px;top:496px;width:11px;height:1px;background:#d4d0c8;"></div>
<div class="a" style="left:197px;top:486px;width:1px;height:11px;background:#d4d0c8;"></div>
<div class="a" style="left:255px;top:485px;width:13px;height:13px;background:#ffffff;"></div>
<div class="a" style="left:255px;top:485px;width:13px;height:1px;background:#808080;"></div>
<div class="a" style="left:255px;top:485px;width:1px;height:13px;background:#808080;"></div>
<div class="a" style="left:255px;top:497px;width:13px;height:1px;background:#ffffff;"></div>
<div class="a" style="left:267px;top:485px;width:1px;height:13px;background:#ffffff;"></div>
<div class="a" style="left:256px;top:486px;width:11px;height:1px;background:#404040;"></div>
<div class="a" style="left:256px;top:486px;width:1px;height:11px;background:#404040;"></div>
<div class="a" style="left:256px;top:496px;width:11px;height:1px;background:#d4d0c8;"></div>
<div class="a" style="left:266px;top:486px;width:1px;height:11px;background:#d4d0c8;"></div>
<svg class="a" style="left:258px;top:488px" width="7" height="7" shape-rendering="crispEdges" fill="#000"><rect x="6" y="0" width="1" height="1"/><rect x="5" y="1" width="1" height="1"/><rect x="6" y="1" width="1" height="1"/><rect x="0" y="2" width="1" height="1"/><rect x="4" y="2" width="1" height="1"/><rect x="5" y="2" width="1" height="1"/><rect x="6" y="2" width="1" height="1"/><rect x="0" y="3" width="1" height="1"/><rect x="1" y="3" width="1" height="1"/><rect x="3" y="3" width="1" height="1"/><rect x="4" y="3" width="1" height="1"/><rect x="5" y="3" width="1" height="1"/><rect x="0" y="4" width="1" height="1"/><rect x="1" y="4" width="1" height="1"/><rect x="2" y="4" width="1" height="1"/><rect x="3" y="4" width="1" height="1"/><rect x="4" y="4" width="1" height="1"/><rect x="1" y="5" width="1" height="1"/><rect x="2" y="5" width="1" height="1"/><rect x="3" y="5" width="1" height="1"/><rect x="2" y="6" width="1" height="1"/></svg>
<div class="a" style="left:33px;top:505px;width:9px;height:9px;background:#fff;box-sizing:border-box;border:1px solid #808080;"></div>
<div class="a" style="left:35px;top:509px;width:5px;height:1px;background:#000;"></div>
<div class="t" style="left:47px;top:503px;">Теневое копирован...</div>
<div class="t" style="left:58px;top:520px;">Исходящие сооб...</div>
<div class="a" style="left:186px;top:519px;width:13px;height:13px;background:#ffffff;"></div>
<div class="a" style="left:186px;top:519px;width:13px;height:1px;background:#808080;"></div>
<div class="a" style="left:186px;top:519px;width:1px;height:13px;background:#808080;"></div>
<div class="a" style="left:186px;top:531px;width:13px;height:1px;background:#ffffff;"></div>
<div class="a" style="left:198px;top:519px;width:1px;height:13px;background:#ffffff;"></div>
<div class="a" style="left:187px;top:520px;width:11px;height:1px;background:#404040;"></div>
<div class="a" style="left:187px;top:520px;width:1px;height:11px;background:#404040;"></div>
<div class="a" style="left:187px;top:530px;width:11px;height:1px;background:#d4d0c8;"></div>
<div class="a" style="left:197px;top:520px;width:1px;height:11px;background:#d4d0c8;"></div>
<div class="a" style="left:255px;top:519px;width:13px;height:13px;background:#ffffff;"></div>
<div class="a" style="left:255px;top:519px;width:13px;height:1px;background:#808080;"></div>
<div class="a" style="left:255px;top:519px;width:1px;height:13px;background:#808080;"></div>
<div class="a" style="left:255px;top:531px;width:13px;height:1px;background:#ffffff;"></div>
<div class="a" style="left:267px;top:519px;width:1px;height:13px;background:#ffffff;"></div>
<div class="a" style="left:256px;top:520px;width:11px;height:1px;background:#404040;"></div>
<div class="a" style="left:256px;top:520px;width:1px;height:11px;background:#404040;"></div>
<div class="a" style="left:256px;top:530px;width:11px;height:1px;background:#d4d0c8;"></div>
<div class="a" style="left:266px;top:520px;width:1px;height:11px;background:#d4d0c8;"></div>
<svg class="a" style="left:258px;top:522px" width="7" height="7" shape-rendering="crispEdges" fill="#000"><rect x="6" y="0" width="1" height="1"/><rect x="5" y="1" width="1" height="1"/><rect x="6" y="1" width="1" height="1"/><rect x="0" y="2" width="1" height="1"/><rect x="4" y="2" width="1" height="1"/><rect x="5" y="2" width="1" height="1"/><rect x="6" y="2" width="1" height="1"/><rect x="0" y="3" width="1" height="1"/><rect x="1" y="3" width="1" height="1"/><rect x="3" y="3" width="1" height="1"/><rect x="4" y="3" width="1" height="1"/><rect x="5" y="3" width="1" height="1"/><rect x="0" y="4" width="1" height="1"/><rect x="1" y="4" width="1" height="1"/><rect x="2" y="4" width="1" height="1"/><rect x="3" y="4" width="1" height="1"/><rect x="4" y="4" width="1" height="1"/><rect x="1" y="5" width="1" height="1"/><rect x="2" y="5" width="1" height="1"/><rect x="3" y="5" width="1" height="1"/><rect x="2" y="6" width="1" height="1"/></svg>
<div class="t" style="left:58px;top:537px;">Исходящие файлы</div>
<div class="a" style="left:186px;top:536px;width:13px;height:13px;background:#ffffff;"></div>
<div class="a" style="left:186px;top:536px;width:13px;height:1px;background:#808080;"></div>
<div class="a" style="left:186px;top:536px;width:1px;height:13px;background:#808080;"></div>
<div class="a" style="left:186px;top:548px;width:13px;height:1px;background:#ffffff;"></div>
<div class="a" style="left:198px;top:536px;width:1px;height:13px;background:#ffffff;"></div>
<div class="a" style="left:187px;top:537px;width:11px;height:1px;background:#404040;"></div>
<div class="a" style="left:187px;top:537px;width:1px;height:11px;background:#404040;"></div>
<div class="a" style="left:187px;top:547px;width:11px;height:1px;background:#d4d0c8;"></div>
<div class="a" style="left:197px;top:537px;width:1px;height:11px;background:#d4d0c8;"></div>
<div class="a" style="left:255px;top:536px;width:13px;height:13px;background:#ffffff;"></div>
<div class="a" style="left:255px;top:536px;width:13px;height:1px;background:#808080;"></div>
<div class="a" style="left:255px;top:536px;width:1px;height:13px;background:#808080;"></div>
<div class="a" style="left:255px;top:548px;width:13px;height:1px;background:#ffffff;"></div>
<div class="a" style="left:267px;top:536px;width:1px;height:13px;background:#ffffff;"></div>
<div class="a" style="left:256px;top:537px;width:11px;height:1px;background:#404040;"></div>
<div class="a" style="left:256px;top:537px;width:1px;height:11px;background:#404040;"></div>
<div class="a" style="left:256px;top:547px;width:11px;height:1px;background:#d4d0c8;"></div>
<div class="a" style="left:266px;top:537px;width:1px;height:11px;background:#d4d0c8;"></div>
<svg class="a" style="left:258px;top:539px" width="7" height="7" shape-rendering="crispEdges" fill="#000"><rect x="6" y="0" width="1" height="1"/><rect x="5" y="1" width="1" height="1"/><rect x="6" y="1" width="1" height="1"/><rect x="0" y="2" width="1" height="1"/><rect x="4" y="2" width="1" height="1"/><rect x="5" y="2" width="1" height="1"/><rect x="6" y="2" width="1" height="1"/><rect x="0" y="3" width="1" height="1"/><rect x="1" y="3" width="1" height="1"/><rect x="3" y="3" width="1" height="1"/><rect x="4" y="3" width="1" height="1"/><rect x="5" y="3" width="1" height="1"/><rect x="0" y="4" width="1" height="1"/><rect x="1" y="4" width="1" height="1"/><rect x="2" y="4" width="1" height="1"/><rect x="3" y="4" width="1" height="1"/><rect x="4" y="4" width="1" height="1"/><rect x="1" y="5" width="1" height="1"/><rect x="2" y="5" width="1" height="1"/><rect x="3" y="5" width="1" height="1"/><rect x="2" y="6" width="1" height="1"/></svg>
<div class="a" style="left:33px;top:556px;width:9px;height:9px;background:#fff;box-sizing:border-box;border:1px solid #808080;"></div>
<div class="a" style="left:35px;top:560px;width:5px;height:1px;background:#000;"></div>
<div class="t" style="left:47px;top:554px;">Алерт</div>
<div class="t" style="left:58px;top:571px;">Соединение</div>
<div class="a" style="left:186px;top:570px;width:13px;height:13px;background:#ffffff;"></div>
<div class="a" style="left:186px;top:570px;width:13px;height:1px;background:#808080;"></div>
<div class="a" style="left:186px;top:570px;width:1px;height:13px;background:#808080;"></div>
<div class="a" style="left:186px;top:582px;width:13px;height:1px;background:#ffffff;"></div>
<div class="a" style="left:198px;top:570px;width:1px;height:13px;background:#ffffff;"></div>
<div class="a" style="left:187px;top:571px;width:11px;height:1px;background:#404040;"></div>
<div class="a" style="left:187px;top:571px;width:1px;height:11px;background:#404040;"></div>
<div class="a" style="left:187px;top:581px;width:11px;height:1px;background:#d4d0c8;"></div>
<div class="a" style="left:197px;top:571px;width:1px;height:11px;background:#d4d0c8;"></div>
<div class="a" style="left:255px;top:570px;width:13px;height:13px;background:#ffffff;"></div>
<div class="a" style="left:255px;top:570px;width:13px;height:1px;background:#808080;"></div>
<div class="a" style="left:255px;top:570px;width:1px;height:13px;background:#808080;"></div>
<div class="a" style="left:255px;top:582px;width:13px;height:1px;background:#ffffff;"></div>
<div class="a" style="left:267px;top:570px;width:1px;height:13px;background:#ffffff;"></div>
<div class="a" style="left:256px;top:571px;width:11px;height:1px;background:#404040;"></div>
<div class="a" style="left:256px;top:571px;width:1px;height:11px;background:#404040;"></div>
<div class="a" style="left:256px;top:581px;width:11px;height:1px;background:#d4d0c8;"></div>
<div class="a" style="left:266px;top:571px;width:1px;height:11px;background:#d4d0c8;"></div>
<div class="a" style="left:57px;top:585px;width:240px;height:15px;background:#0a246a;"></div>
<div class="a" style="left:227px;top:585px;width:68px;height:14px;border:1px dotted #e8e0a0;border-bottom:none;"></div>
<div class="t" style="left:58px;top:588px;color:#fff;">Исходящие сооб...</div>
<div class="a" style="left:186px;top:587px;width:13px;height:13px;background:#ffffff;"></div>
<div class="a" style="left:186px;top:587px;width:13px;height:1px;background:#808080;"></div>
<div class="a" style="left:186px;top:587px;width:1px;height:13px;background:#808080;"></div>
<div class="a" style="left:186px;top:599px;width:13px;height:1px;background:#ffffff;"></div>
<div class="a" style="left:198px;top:587px;width:1px;height:13px;background:#ffffff;"></div>
<div class="a" style="left:187px;top:588px;width:11px;height:1px;background:#404040;"></div>
<div class="a" style="left:187px;top:588px;width:1px;height:11px;background:#404040;"></div>
<div class="a" style="left:187px;top:598px;width:11px;height:1px;background:#d4d0c8;"></div>
<div class="a" style="left:197px;top:588px;width:1px;height:11px;background:#d4d0c8;"></div>
<div class="a" style="left:255px;top:587px;width:13px;height:13px;background:#ffffff;"></div>
<div class="a" style="left:255px;top:587px;width:13px;height:1px;background:#808080;"></div>
<div class="a" style="left:255px;top:587px;width:1px;height:13px;background:#808080;"></div>
<div class="a" style="left:255px;top:599px;width:13px;height:1px;background:#ffffff;"></div>
<div class="a" style="left:267px;top:587px;width:1px;height:13px;background:#ffffff;"></div>
<div class="a" style="left:256px;top:588px;width:11px;height:1px;background:#404040;"></div>
<div class="a" style="left:256px;top:588px;width:1px;height:11px;background:#404040;"></div>
<div class="a" style="left:256px;top:598px;width:11px;height:1px;background:#d4d0c8;"></div>
<div class="a" style="left:266px;top:588px;width:1px;height:11px;background:#d4d0c8;"></div>
<svg class="a" style="left:258px;top:590px" width="7" height="7" shape-rendering="crispEdges" fill="#000"><rect x="6" y="0" width="1" height="1"/><rect x="5" y="1" width="1" height="1"/><rect x="6" y="1" width="1" height="1"/><rect x="0" y="2" width="1" height="1"/><rect x="4" y="2" width="1" height="1"/><rect x="5" y="2" width="1" height="1"/><rect x="6" y="2" width="1" height="1"/><rect x="0" y="3" width="1" height="1"/><rect x="1" y="3" width="1" height="1"/><rect x="3" y="3" width="1" height="1"/><rect x="4" y="3" width="1" height="1"/><rect x="5" y="3" width="1" height="1"/><rect x="0" y="4" width="1" height="1"/><rect x="1" y="4" width="1" height="1"/><rect x="2" y="4" width="1" height="1"/><rect x="3" y="4" width="1" height="1"/><rect x="4" y="4" width="1" height="1"/><rect x="1" y="5" width="1" height="1"/><rect x="2" y="5" width="1" height="1"/><rect x="3" y="5" width="1" height="1"/><rect x="2" y="6" width="1" height="1"/></svg>
<svg class="a" style="left:474px;top:121px" width="10" height="15" shape-rendering="crispEdges"><rect x="5" y="0" width="1" height="1" fill="#909090"/><rect x="6" y="0" width="1" height="1" fill="#909090"/><rect x="7" y="0" width="1" height="1" fill="#909090"/><rect x="9" y="0" width="1" height="1" fill="#000"/><rect x="3" y="1" width="1" height="1" fill="#909090"/><rect x="4" y="1" width="1" height="1" fill="#909090"/><rect x="5" y="1" width="1" height="1" fill="#fff"/><rect x="6" y="1" width="1" height="1" fill="#fff"/><rect x="7" y="1" width="1" height="1" fill="#fff"/><rect x="8" y="1" width="1" height="1" fill="#000"/><rect x="1" y="2" width="1" height="1" fill="#909090"/><rect x="2" y="2" width="1" height="1" fill="#909090"/><rect x="3" y="2" width="1" height="1" fill="#fff"/><rect x="4" y="2" width="1" height="1" fill="#fff"/><rect x="5" y="2" width="1" height="1" fill="#fff"/><rect x="6" y="2" width="1" height="1" fill="#fff"/><rect x="7" y="2" width="1" height="1" fill="#000"/><rect x="0" y="3" width="1" height="1" fill="#909090"/><rect x="1" y="3" width="1" height="1" fill="#909090"/><rect x="2" y="3" width="1" height="1" fill="#fff"/><rect x="3" y="3" width="1" height="1" fill="#fff"/><rect x="4" y="3" width="1" height="1" fill="#fff"/><rect x="5" y="3" width="1" height="1" fill="#fff"/><rect x="6" y="3" width="1" height="1" fill="#000"/><rect x="0" y="4" width="1" height="1" fill="#909090"/><rect x="1" y="4" width="1" height="1" fill="#fff"/><rect x="2" y="4" width="1" height="1" fill="#fff"/><rect x="3" y="4" width="1" height="1" fill="#000"/><rect x="4" y="4" width="1" height="1" fill="#000"/><rect x="5" y="4" width="1" height="1" fill="#fff"/><rect x="6" y="4" width="1" height="1" fill="#000"/><rect x="0" y="5" width="1" height="1" fill="#909090"/><rect x="1" y="5" width="1" height="1" fill="#fff"/><rect x="2" y="5" width="1" height="1" fill="#fff"/><rect x="3" y="5" width="1" height="1" fill="#000"/><rect x="4" y="5" width="1" height="1" fill="#fff"/><rect x="5" y="5" width="1" height="1" fill="#fff"/><rect x="6" y="5" width="1" height="1" fill="#000"/><rect x="0" y="6" width="1" height="1" fill="#909090"/><rect x="1" y="6" width="1" height="1" fill="#fff"/><rect x="2" y="6" width="1" height="1" fill="#fff"/><rect x="3" y="6" width="1" height="1" fill="#fff"/><rect x="4" y="6" width="1" height="1" fill="#fff"/><rect x="5" y="6" width="1" height="1" fill="#fff"/><rect x="6" y="6" width="1" height="1" fill="#000"/><rect x="0" y="7" width="1" height="1" fill="#909090"/><rect x="1" y="7" width="1" height="1" fill="#fff"/><rect x="2" y="7" width="1" height="1" fill="#fff"/><rect x="3" y="7" width="1" height="1" fill="#fff"/><rect x="4" y="7" width="1" height="1" fill="#fff"/><rect x="5" y="7" width="1" height="1" fill="#000"/><rect x="6" y="7" width="1" height="1" fill="#000"/><rect x="7" y="7" width="1" height="1" fill="#000"/><rect x="0" y="8" width="1" height="1" fill="#909090"/><rect x="1" y="8" width="1" height="1" fill="#fff"/><rect x="2" y="8" width="1" height="1" fill="#fff"/><rect x="3" y="8" width="1" height="1" fill="#fff"/><rect x="4" y="8" width="1" height="1" fill="#fff"/><rect x="5" y="8" width="1" height="1" fill="#000"/><rect x="6" y="8" width="1" height="1" fill="#000"/><rect x="0" y="9" width="1" height="1" fill="#909090"/><rect x="1" y="9" width="1" height="1" fill="#fff"/><rect x="2" y="9" width="1" height="1" fill="#fff"/><rect x="3" y="9" width="1" height="1" fill="#000"/><rect x="4" y="9" width="1" height="1" fill="#fff"/><rect x="5" y="9" width="1" height="1" fill="#fff"/><rect x="6" y="9" width="1" height="1" fill="#000"/><rect x="7" y="9" width="1" height="1" fill="#000"/><rect x="1" y="10" width="1" height="1" fill="#000"/><rect x="2" y="10" width="1" height="1" fill="#fff"/><rect x="3" y="10" width="1" height="1" fill="#fff"/><rect x="4" y="10" width="1" height="1" fill="#000"/><rect x="5" y="10" width="1" height="1" fill="#000"/><rect x="6" y="10" width="1" height="1" fill="#000"/><rect x="7" y="10" width="1" height="1" fill="#000"/><rect x="1" y="11" width="1" height="1" fill="#000"/><rect x="2" y="11" width="1" height="1" fill="#000"/><rect x="3" y="11" width="1" height="1" fill="#fff"/><rect x="4" y="11" width="1" height="1" fill="#fff"/><rect x="5" y="11" width="1" height="1" fill="#fff"/><rect x="6" y="11" width="1" height="1" fill="#fff"/><rect x="7" y="11" width="1" height="1" fill="#000"/><rect x="2" y="12" width="1" height="1" fill="#000"/><rect x="3" y="12" width="1" height="1" fill="#000"/><rect x="4" y="12" width="1" height="1" fill="#fff"/><rect x="5" y="12" width="1" height="1" fill="#fff"/><rect x="6" y="12" width="1" height="1" fill="#fff"/><rect x="7" y="12" width="1" height="1" fill="#fff"/><rect x="8" y="12" width="1" height="1" fill="#000"/><rect x="4" y="13" width="1" height="1" fill="#000"/><rect x="5" y="13" width="1" height="1" fill="#000"/><rect x="6" y="13" width="1" height="1" fill="#fff"/><rect x="7" y="13" width="1" height="1" fill="#fff"/><rect x="8" y="13" width="1" height="1" fill="#000"/><rect x="9" y="13" width="1" height="1" fill="#000"/><rect x="5" y="14" width="1" height="1" fill="#000"/><rect x="6" y="14" width="1" height="1" fill="#000"/><rect x="7" y="14" width="1" height="1" fill="#000"/><rect x="8" y="14" width="1" height="1" fill="#000"/><rect x="9" y="14" width="1" height="1" fill="#000"/></svg>
<svg class="a" style="left:858px;top:121px" width="10" height="15" shape-rendering="crispEdges"><rect x="5" y="0" width="1" height="1" fill="#909090"/><rect x="6" y="0" width="1" height="1" fill="#909090"/><rect x="7" y="0" width="1" height="1" fill="#909090"/><rect x="9" y="0" width="1" height="1" fill="#000"/><rect x="3" y="1" width="1" height="1" fill="#909090"/><rect x="4" y="1" width="1" height="1" fill="#909090"/><rect x="5" y="1" width="1" height="1" fill="#fff"/><rect x="6" y="1" width="1" height="1" fill="#fff"/><rect x="7" y="1" width="1" height="1" fill="#fff"/><rect x="8" y="1" width="1" height="1" fill="#000"/><rect x="1" y="2" width="1" height="1" fill="#909090"/><rect x="2" y="2" width="1" height="1" fill="#909090"/><rect x="3" y="2" width="1" height="1" fill="#fff"/><rect x="4" y="2" width="1" height="1" fill="#fff"/><rect x="5" y="2" width="1" height="1" fill="#fff"/><rect x="6" y="2" width="1" height="1" fill="#fff"/><rect x="7" y="2" width="1" height="1" fill="#000"/><rect x="0" y="3" width="1" height="1" fill="#909090"/><rect x="1" y="3" width="1" height="1" fill="#909090"/><rect x="2" y="3" width="1" height="1" fill="#fff"/><rect x="3" y="3" width="1" height="1" fill="#fff"/><rect x="4" y="3" width="1" height="1" fill="#fff"/><rect x="5" y="3" width="1" height="1" fill="#fff"/><rect x="6" y="3" width="1" height="1" fill="#000"/><rect x="0" y="4" width="1" height="1" fill="#909090"/><rect x="1" y="4" width="1" height="1" fill="#fff"/><rect x="2" y="4" width="1" height="1" fill="#fff"/><rect x="3" y="4" width="1" height="1" fill="#000"/><rect x="4" y="4" width="1" height="1" fill="#000"/><rect x="5" y="4" width="1" height="1" fill="#fff"/><rect x="6" y="4" width="1" height="1" fill="#000"/><rect x="0" y="5" width="1" height="1" fill="#909090"/><rect x="1" y="5" width="1" height="1" fill="#fff"/><rect x="2" y="5" width="1" height="1" fill="#fff"/><rect x="3" y="5" width="1" height="1" fill="#000"/><rect x="4" y="5" width="1" height="1" fill="#fff"/><rect x="5" y="5" width="1" height="1" fill="#fff"/><rect x="6" y="5" width="1" height="1" fill="#000"/><rect x="0" y="6" width="1" height="1" fill="#909090"/><rect x="1" y="6" width="1" height="1" fill="#fff"/><rect x="2" y="6" width="1" height="1" fill="#fff"/><rect x="3" y="6" width="1" height="1" fill="#fff"/><rect x="4" y="6" width="1" height="1" fill="#fff"/><rect x="5" y="6" width="1" height="1" fill="#fff"/><rect x="6" y="6" width="1" height="1" fill="#000"/><rect x="0" y="7" width="1" height="1" fill="#909090"/><rect x="1" y="7" width="1" height="1" fill="#fff"/><rect x="2" y="7" width="1" height="1" fill="#fff"/><rect x="3" y="7" width="1" height="1" fill="#fff"/><rect x="4" y="7" width="1" height="1" fill="#fff"/><rect x="5" y="7" width="1" height="1" fill="#000"/><rect x="6" y="7" width="1" height="1" fill="#000"/><rect x="7" y="7" width="1" height="1" fill="#000"/><rect x="0" y="8" width="1" height="1" fill="#909090"/><rect x="1" y="8" width="1" height="1" fill="#fff"/><rect x="2" y="8" width="1" height="1" fill="#fff"/><rect x="3" y="8" width="1" height="1" fill="#fff"/><rect x="4" y="8" width="1" height="1" fill="#fff"/><rect x="5" y="8" width="1" height="1" fill="#000"/><rect x="6" y="8" width="1" height="1" fill="#000"/><rect x="0" y="9" width="1" height="1" fill="#909090"/><rect x="1" y="9" width="1" height="1" fill="#fff"/><rect x="2" y="9" width="1" height="1" fill="#fff"/><rect x="3" y="9" width="1" height="1" fill="#000"/><rect x="4" y="9" width="1" height="1" fill="#fff"/><rect x="5" y="9" width="1" height="1" fill="#fff"/><rect x="6" y="9" width="1" height="1" fill="#000"/><rect x="7" y="9" width="1" height="1" fill="#000"/><rect x="1" y="10" width="1" height="1" fill="#000"/><rect x="2" y="10" width="1" height="1" fill="#fff"/><rect x="3" y="10" width="1" height="1" fill="#fff"/><rect x="4" y="10" width="1" height="1" fill="#000"/><rect x="5" y="10" width="1" height="1" fill="#000"/><rect x="6" y="10" width="1" height="1" fill="#000"/><rect x="7" y="10" width="1" height="1" fill="#000"/><rect x="1" y="11" width="1" height="1" fill="#000"/><rect x="2" y="11" width="1" height="1" fill="#000"/><rect x="3" y="11" width="1" height="1" fill="#fff"/><rect x="4" y="11" width="1" height="1" fill="#fff"/><rect x="5" y="11" width="1" height="1" fill="#fff"/><rect x="6" y="11" width="1" height="1" fill="#fff"/><rect x="7" y="11" width="1" height="1" fill="#000"/><rect x="2" y="12" width="1" height="1" fill="#000"/><rect x="3" y="12" width="1" height="1" fill="#000"/><rect x="4" y="12" width="1" height="1" fill="#fff"/><rect x="5" y="12" width="1" height="1" fill="#fff"/><rect x="6" y="12" width="1" height="1" fill="#fff"/><rect x="7" y="12" width="1" height="1" fill="#fff"/><rect x="8" y="12" width="1" height="1" fill="#000"/><rect x="4" y="13" width="1" height="1" fill="#000"/><rect x="5" y="13" width="1" height="1" fill="#000"/><rect x="6" y="13" width="1" height="1" fill="#fff"/><rect x="7" y="13" width="1" height="1" fill="#fff"/><rect x="8" y="13" width="1" height="1" fill="#000"/><rect x="9" y="13" width="1" height="1" fill="#000"/><rect x="5" y="14" width="1" height="1" fill="#000"/><rect x="6" y="14" width="1" height="1" fill="#000"/><rect x="7" y="14" width="1" height="1" fill="#000"/><rect x="8" y="14" width="1" height="1" fill="#000"/><rect x="9" y="14" width="1" height="1" fill="#000"/></svg>
<svg class="a" style="left:663px;top:121px" width="16" height="16" shape-rendering="crispEdges"><rect x="7" y="0" width="1" height="1" fill="#5a5a40"/><rect x="8" y="0" width="1" height="1" fill="#5a5a40"/><rect x="6" y="1" width="1" height="1" fill="#5a5a40"/><rect x="7" y="1" width="1" height="1" fill="#ffff00"/><rect x="8" y="1" width="1" height="1" fill="#ffff00"/><rect x="9" y="1" width="1" height="1" fill="#5a5a40"/><rect x="2" y="2" width="1" height="1" fill="#5a5a40"/><rect x="3" y="2" width="1" height="1" fill="#5a5a40"/><rect x="6" y="2" width="1" height="1" fill="#5a5a40"/><rect x="7" y="2" width="1" height="1" fill="#ffff00"/><rect x="8" y="2" width="1" height="1" fill="#ffff00"/><rect x="9" y="2" width="1" height="1" fill="#5a5a40"/><rect x="13" y="2" width="1" height="1" fill="#000"/><rect x="14" y="2" width="1" height="1" fill="#000"/><rect x="2" y="3" width="1" height="1" fill="#5a5a40"/><rect x="3" y="3" width="1" height="1" fill="#ffff00"/><rect x="4" y="3" width="1" height="1" fill="#ffff00"/><rect x="5" y="3" width="1" height="1" fill="#5a5a40"/><rect x="6" y="3" width="1" height="1" fill="#5a5a40"/><rect x="7" y="3" width="1" height="1" fill="#ffff00"/><rect x="8" y="3" width="1" height="1" fill="#ffff00"/><rect x="9" y="3" width="1" height="1" fill="#ffff00"/><rect x="10" y="3" width="1" height="1" fill="#ffff00"/><rect x="11" y="3" width="1" height="1" fill="#000"/><rect x="12" y="3" width="1" height="1" fill="#000"/><rect x="13" y="3" width="1" height="1" fill="#ffff00"/><rect x="14" y="3" width="1" height="1" fill="#ffff00"/><rect x="15" y="3" width="1" height="1" fill="#000"/><rect x="2" y="4" width="1" height="1" fill="#5a5a40"/><rect x="3" y="4" width="1" height="1" fill="#ffff00"/><rect x="4" y="4" width="1" height="1" fill="#ffff00"/><rect x="5" y="4" width="1" height="1" fill="#5a5a40"/><rect x="6" y="4" width="1" height="1" fill="#ffff00"/><rect x="7" y="4" width="1" height="1" fill="#ffff00"/><rect x="8" y="4" width="1" height="1" fill="#ffff00"/><rect x="9" y="4" width="1" height="1" fill="#ffff00"/><rect x="10" y="4" width="1" height="1" fill="#ffff00"/><rect x="11" y="4" width="1" height="1" fill="#ffff00"/><rect x="12" y="4" width="1" height="1" fill="#000"/><rect x="13" y="4" width="1" height="1" fill="#ffff00"/><rect x="14" y="4" width="1" height="1" fill="#ffff00"/><rect x="15" y="4" width="1" height="1" fill="#000"/><rect x="3" y="5" width="1" height="1" fill="#5a5a40"/><rect x="4" y="5" width="1" height="1" fill="#5a5a40"/><rect x="5" y="5" width="1" height="1" fill="#ffff00"/><rect x="6" y="5" width="1" height="1" fill="#ffff00"/><rect x="7" y="5" width="1" height="1" fill="#ffff00"/><rect x="8" y="5" width="1" height="1" fill="#ffff00"/><rect x="9" y="5" width="1" height="1" fill="#ffff00"/><rect x="10" y="5" width="1" height="1" fill="#ffff00"/><rect x="11" y="5" width="1" height="1" fill="#ffff00"/><rect x="12" y="5" width="1" height="1" fill="#ffff00"/><rect x="13" y="5" width="1" height="1" fill="#000"/><rect x="14" y="5" width="1" height="1" fill="#000"/><rect x="1" y="6" width="1" height="1" fill="#5a5a40"/><rect x="2" y="6" width="1" height="1" fill="#5a5a40"/><rect x="3" y="6" width="1" height="1" fill="#5a5a40"/><rect x="4" y="6" width="1" height="1" fill="#ffff00"/><rect x="5" y="6" width="1" height="1" fill="#ffff00"/><rect x="6" y="6" width="1" height="1" fill="#000"/><rect x="7" y="6" width="1" height="1" fill="#ffff00"/><rect x="8" y="6" width="1" height="1" fill="#ffff00"/><rect x="9" y="6" width="1" height="1" fill="#000"/><rect x="10" y="6" width="1" height="1" fill="#ffff00"/><rect x="11" y="6" width="1" height="1" fill="#ffff00"/><rect x="12" y="6" width="1" height="1" fill="#ffff00"/><rect x="13" y="6" width="1" height="1" fill="#000"/><rect x="0" y="7" width="1" height="1" fill="#5a5a40"/><rect x="1" y="7" width="1" height="1" fill="#ffff00"/><rect x="2" y="7" width="1" height="1" fill="#ffff00"/><rect x="3" y="7" width="1" height="1" fill="#ffff00"/><rect x="4" y="7" width="1" height="1" fill="#ffff00"/><rect x="5" y="7" width="1" height="1" fill="#ffff00"/><rect x="6" y="7" width="1" height="1" fill="#ffff00"/><rect x="7" y="7" width="1" height="1" fill="#ffff00"/><rect x="8" y="7" width="1" height="1" fill="#ffff00"/><rect x="9" y="7" width="1" height="1" fill="#ffff00"/><rect x="10" y="7" width="1" height="1" fill="#ffff00"/><rect x="11" y="7" width="1" height="1" fill="#ffff00"/><rect x="12" y="7" width="1" height="1" fill="#ffff00"/><rect x="13" y="7" width="1" height="1" fill="#ffff00"/><rect x="14" y="7" width="1" height="1" fill="#ffff00"/><rect x="15" y="7" width="1" height="1" fill="#000"/><rect x="0" y="8" width="1" height="1" fill="#5a5a40"/><rect x="1" y="8" width="1" height="1" fill="#ffff00"/><rect x="2" y="8" width="1" height="1" fill="#ffff00"/><rect x="3" y="8" width="1" height="1" fill="#ffff00"/><rect x="4" y="8" width="1" height="1" fill="#ffff00"/><rect x="5" y="8" width="1" height="1" fill="#ffff00"/><rect x="6" y="8" width="1" height="1" fill="#ffff00"/><rect x="7" y="8" width="1" height="1" fill="#ffff00"/><rect x="8" y="8" width="1" height="1" fill="#ffff00"/><rect x="9" y="8" width="1" height="1" fill="#ffff00"/><rect x="10" y="8" width="1" height="1" fill="#ffff00"/><rect x="11" y="8" width="1" height="1" fill="#ffff00"/><rect x="12" y="8" width="1" height="1" fill="#ffff00"/><rect x="13" y="8" width="1" height="1" fill="#ffff00"/><rect x="14" y="8" width="1" height="1" fill="#ffff00"/><rect x="15" y="8" width="1" height="1" fill="#000"/><rect x="1" y="9" width="1" height="1" fill="#5a5a40"/><rect x="2" y="9" width="1" height="1" fill="#5a5a40"/><rect x="3" y="9" width="1" height="1" fill="#5a5a40"/><rect x="4" y="9" width="1" height="1" fill="#ffff00"/><rect x="5" y="9" width="1" height="1" fill="#ffff00"/><rect x="6" y="9" width="1" height="1" fill="#000"/><rect x="7" y="9" width="1" height="1" fill="#ffff00"/><rect x="8" y="9" width="1" height="1" fill="#ffff00"/><rect x="9" y="9" width="1" height="1" fill="#000"/><rect x="10" y="9" width="1" height="1" fill="#ffff00"/><rect x="11" y="9" width="1" height="1" fill="#ffff00"/><rect x="12" y="9" width="1" height="1" fill="#ffff00"/><rect x="13" y="9" width="1" height="1" fill="#000"/><rect x="3" y="10" width="1" height="1" fill="#000"/><rect x="4" y="10" width="1" height="1" fill="#ffff00"/><rect x="5" y="10" width="1" height="1" fill="#ffff00"/><rect x="6" y="10" width="1" height="1" fill="#ffff00"/><rect x="7" y="10" width="1" height="1" fill="#000"/><rect x="8" y="10" width="1" height="1" fill="#000"/><rect x="9" y="10" width="1" height="1" fill="#ffff00"/><rect x="10" y="10" width="1" height="1" fill="#ffff00"/><rect x="11" y="10" width="1" height="1" fill="#ffff00"/><rect x="12" y="10" width="1" height="1" fill="#000"/><rect x="2" y="11" width="1" height="1" fill="#000"/><rect x="3" y="11" width="1" height="1" fill="#ffff00"/><rect x="4" y="11" width="1" height="1" fill="#ffff00"/><rect x="5" y="11" width="1" height="1" fill="#000"/><rect x="6" y="11" width="1" height="1" fill="#ffff00"/><rect x="7" y="11" width="1" height="1" fill="#ffff00"/><rect x="8" y="11" width="1" height="1" fill="#ffff00"/><rect x="9" y="11" width="1" height="1" fill="#ffff00"/><rect x="10" y="11" width="1" height="1" fill="#000"/><rect x="11" y="11" width="1" height="1" fill="#ffff00"/><rect x="12" y="11" width="1" height="1" fill="#ffff00"/><rect x="13" y="11" width="1" height="1" fill="#000"/><rect x="2" y="12" width="1" height="1" fill="#000"/><rect x="3" y="12" width="1" height="1" fill="#ffff00"/><rect x="4" y="12" width="1" height="1" fill="#ffff00"/><rect x="5" y="12" width="1" height="1" fill="#ffff00"/><rect x="6" y="12" width="1" height="1" fill="#000"/><rect x="7" y="12" width="1" height="1" fill="#000"/><rect x="8" y="12" width="1" height="1" fill="#000"/><rect x="9" y="12" width="1" height="1" fill="#000"/><rect x="10" y="12" width="1" height="1" fill="#ffff00"/><rect x="11" y="12" width="1" height="1" fill="#ffff00"/><rect x="12" y="12" width="1" height="1" fill="#ffff00"/><rect x="13" y="12" width="1" height="1" fill="#000"/><rect x="2" y="13" width="1" height="1" fill="#000"/><rect x="3" y="13" width="1" height="1" fill="#000"/><rect x="4" y="13" width="1" height="1" fill="#000"/><rect x="5" y="13" width="1" height="1" fill="#000"/><rect x="6" y="13" width="1" height="1" fill="#ffff00"/><rect x="7" y="13" width="1" height="1" fill="#ffff00"/><rect x="8" y="13" width="1" height="1" fill="#ffff00"/><rect x="9" y="13" width="1" height="1" fill="#ffff00"/><rect x="10" y="13" width="1" height="1" fill="#000"/><rect x="11" y="13" width="1" height="1" fill="#000"/><rect x="12" y="13" width="1" height="1" fill="#000"/><rect x="13" y="13" width="1" height="1" fill="#000"/><rect x="6" y="14" width="1" height="1" fill="#000"/><rect x="7" y="14" width="1" height="1" fill="#ffff00"/><rect x="8" y="14" width="1" height="1" fill="#ffff00"/><rect x="9" y="14" width="1" height="1" fill="#000"/><rect x="7" y="15" width="1" height="1" fill="#000"/><rect x="8" y="15" width="1" height="1" fill="#000"/></svg>
<div class="t c" style="left:279px;width:400px;text-align:center;top:145px;">0</div>
<div class="t c" style="left:311px;width:400px;text-align:center;top:145px;">2</div>
<div class="t c" style="left:343px;width:400px;text-align:center;top:145px;">4</div>
<div class="t c" style="left:375px;width:400px;text-align:center;top:145px;">6</div>
<div class="t c" style="left:407px;width:400px;text-align:center;top:145px;">8</div>
<div class="t c" style="left:439px;width:400px;text-align:center;top:145px;">10</div>
<div class="t c" style="left:471px;width:400px;text-align:center;top:145px;">12</div>
<div class="t c" style="left:503px;width:400px;text-align:center;top:145px;">14</div>
<div class="t c" style="left:535px;width:400px;text-align:center;top:145px;">16</div>
<div class="t c" style="left:567px;width:400px;text-align:center;top:145px;">18</div>
<div class="t c" style="left:599px;width:400px;text-align:center;top:145px;">20</div>
<div class="t c" style="left:631px;width:400px;text-align:center;top:145px;">22</div>
<div class="t c" style="left:663px;width:400px;text-align:center;top:145px;">24</div>
<div class="a" style="left:493px;top:149px;width:4px;height:4px;background:#000;"></div>
<div class="a" style="left:525px;top:149px;width:4px;height:4px;background:#000;"></div>
<div class="a" style="left:557px;top:149px;width:4px;height:4px;background:#000;"></div>
<div class="a" style="left:589px;top:149px;width:4px;height:4px;background:#000;"></div>
<div class="a" style="left:621px;top:149px;width:4px;height:4px;background:#000;"></div>
<div class="a" style="left:653px;top:149px;width:4px;height:4px;background:#000;"></div>
<div class="a" style="left:685px;top:149px;width:4px;height:4px;background:#000;"></div>
<div class="a" style="left:717px;top:149px;width:4px;height:4px;background:#000;"></div>
<div class="a" style="left:749px;top:149px;width:4px;height:4px;background:#000;"></div>
<div class="a" style="left:781px;top:149px;width:4px;height:4px;background:#000;"></div>
<div class="a" style="left:813px;top:149px;width:4px;height:4px;background:#000;"></div>
<div class="a" style="left:845px;top:149px;width:4px;height:4px;background:#000;"></div>
<div class="a" style="left:390px;top:171px;width:90px;height:50px;background:#d4d0c8;"></div>
<div class="a" style="left:390px;top:171px;width:90px;height:1px;background:#ffffff;"></div>
<div class="a" style="left:390px;top:171px;width:1px;height:50px;background:#ffffff;"></div>
<div class="a" style="left:390px;top:220px;width:90px;height:1px;background:#404040;"></div>
<div class="a" style="left:479px;top:171px;width:1px;height:50px;background:#404040;"></div>
<div class="t c" style="left:234px;width:400px;text-align:center;top:189px;">Все</div>
<div class="a" style="left:390px;top:221px;width:90px;height:45px;background:#d4d0c8;"></div>
<div class="a" style="left:390px;top:221px;width:90px;height:1px;background:#ffffff;"></div>
<div class="a" style="left:390px;top:221px;width:1px;height:45px;background:#ffffff;"></div>
<div class="a" style="left:390px;top:265px;width:90px;height:1px;background:#404040;"></div>
<div class="a" style="left:479px;top:221px;width:1px;height:45px;background:#404040;"></div>
<div class="t c" style="left:234px;width:400px;text-align:center;top:237px;">понедельник</div>
<div class="a" style="left:390px;top:266px;width:90px;height:45px;background:#d4d0c8;"></div>
<div class="a" style="left:390px;top:266px;width:90px;height:1px;background:#ffffff;"></div>
<div class="a" style="left:390px;top:266px;width:1px;height:45px;background:#ffffff;"></div>
<div class="a" style="left:390px;top:310px;width:90px;height:1px;background:#404040;"></div>
<div class="a" style="left:479px;top:266px;width:1px;height:45px;background:#404040;"></div>
<div class="t c" style="left:234px;width:400px;text-align:center;top:282px;">вторник</div>
<div class="a" style="left:390px;top:311px;width:90px;height:45px;background:#d4d0c8;"></div>
<div class="a" style="left:390px;top:311px;width:90px;height:1px;background:#ffffff;"></div>
<div class="a" style="left:390px;top:311px;width:1px;height:45px;background:#ffffff;"></div>
<div class="a" style="left:390px;top:355px;width:90px;height:1px;background:#404040;"></div>
<div class="a" style="left:479px;top:311px;width:1px;height:45px;background:#404040;"></div>
<div class="t c" style="left:234px;width:400px;text-align:center;top:327px;">среда</div>
<div class="a" style="left:390px;top:356px;width:90px;height:45px;background:#d4d0c8;"></div>
<div class="a" style="left:390px;top:356px;width:90px;height:1px;background:#ffffff;"></div>
<div class="a" style="left:390px;top:356px;width:1px;height:45px;background:#ffffff;"></div>
<div class="a" style="left:390px;top:400px;width:90px;height:1px;background:#404040;"></div>
<div class="a" style="left:479px;top:356px;width:1px;height:45px;background:#404040;"></div>
<div class="t c" style="left:234px;width:400px;text-align:center;top:372px;">четверг</div>
<div class="a" style="left:390px;top:401px;width:90px;height:45px;background:#d4d0c8;"></div>
<div class="a" style="left:390px;top:401px;width:90px;height:1px;background:#ffffff;"></div>
<div class="a" style="left:390px;top:401px;width:1px;height:45px;background:#ffffff;"></div>
<div class="a" style="left:390px;top:445px;width:90px;height:1px;background:#404040;"></div>
<div class="a" style="left:479px;top:401px;width:1px;height:45px;background:#404040;"></div>
<div class="t c" style="left:234px;width:400px;text-align:center;top:417px;">пятница</div>
<div class="a" style="left:390px;top:446px;width:90px;height:45px;background:#d4d0c8;"></div>
<div class="a" style="left:390px;top:446px;width:90px;height:1px;background:#ffffff;"></div>
<div class="a" style="left:390px;top:446px;width:1px;height:45px;background:#ffffff;"></div>
<div class="a" style="left:390px;top:490px;width:90px;height:1px;background:#404040;"></div>
<div class="a" style="left:479px;top:446px;width:1px;height:45px;background:#404040;"></div>
<div class="t c" style="left:234px;width:400px;text-align:center;top:462px;">суббота</div>
<div class="a" style="left:390px;top:491px;width:90px;height:45px;background:#d4d0c8;"></div>
<div class="a" style="left:390px;top:491px;width:90px;height:1px;background:#ffffff;"></div>
<div class="a" style="left:390px;top:491px;width:1px;height:45px;background:#ffffff;"></div>
<div class="a" style="left:390px;top:535px;width:90px;height:1px;background:#404040;"></div>
<div class="a" style="left:479px;top:491px;width:1px;height:45px;background:#404040;"></div>
<div class="t c" style="left:234px;width:400px;text-align:center;top:507px;">воскресенье</div>
<div class="a" style="left:480px;top:171px;width:16px;height:50px;background:#d4d0c8;"></div>
<div class="a" style="left:480px;top:171px;width:16px;height:1px;background:#ffffff;"></div>
<div class="a" style="left:480px;top:171px;width:1px;height:50px;background:#ffffff;"></div>
<div class="a" style="left:480px;top:220px;width:16px;height:1px;background:#404040;"></div>
<div class="a" style="left:495px;top:171px;width:1px;height:50px;background:#404040;"></div>
<div class="a" style="left:496px;top:171px;width:16px;height:50px;background:#d4d0c8;"></div>
<div class="a" style="left:496px;top:171px;width:16px;height:1px;background:#ffffff;"></div>
<div class="a" style="left:496px;top:171px;width:1px;height:50px;background:#ffffff;"></div>
<div class="a" style="left:496px;top:220px;width:16px;height:1px;background:#404040;"></div>
<div class="a" style="left:511px;top:171px;width:1px;height:50px;background:#404040;"></div>
<div class="a" style="left:512px;top:171px;width:16px;height:50px;background:#d4d0c8;"></div>
<div class="a" style="left:512px;top:171px;width:16px;height:1px;background:#ffffff;"></div>
<div class="a" style="left:512px;top:171px;width:1px;height:50px;background:#ffffff;"></div>
<div class="a" style="left:512px;top:220px;width:16px;height:1px;background:#404040;"></div>
<div class="a" style="left:527px;top:171px;width:1px;height:50px;background:#404040;"></div>
<div class="a" style="left:528px;top:171px;width:16px;height:50px;background:#d4d0c8;"></div>
<div class="a" style="left:528px;top:171px;width:16px;height:1px;background:#ffffff;"></div>
<div class="a" style="left:528px;top:171px;width:1px;height:50px;background:#ffffff;"></div>
<div class="a" style="left:528px;top:220px;width:16px;height:1px;background:#404040;"></div>
<div class="a" style="left:543px;top:171px;width:1px;height:50px;background:#404040;"></div>
<div class="a" style="left:544px;top:171px;width:16px;height:50px;background:#d4d0c8;"></div>
<div class="a" style="left:544px;top:171px;width:16px;height:1px;background:#ffffff;"></div>
<div class="a" style="left:544px;top:171px;width:1px;height:50px;background:#ffffff;"></div>
<div class="a" style="left:544px;top:220px;width:16px;height:1px;background:#404040;"></div>
<div class="a" style="left:559px;top:171px;width:1px;height:50px;background:#404040;"></div>
<div class="a" style="left:560px;top:171px;width:16px;height:50px;background:#d4d0c8;"></div>
<div class="a" style="left:560px;top:171px;width:16px;height:1px;background:#ffffff;"></div>
<div class="a" style="left:560px;top:171px;width:1px;height:50px;background:#ffffff;"></div>
<div class="a" style="left:560px;top:220px;width:16px;height:1px;background:#404040;"></div>
<div class="a" style="left:575px;top:171px;width:1px;height:50px;background:#404040;"></div>
<div class="a" style="left:576px;top:171px;width:16px;height:50px;background:#d4d0c8;"></div>
<div class="a" style="left:576px;top:171px;width:16px;height:1px;background:#ffffff;"></div>
<div class="a" style="left:576px;top:171px;width:1px;height:50px;background:#ffffff;"></div>
<div class="a" style="left:576px;top:220px;width:16px;height:1px;background:#404040;"></div>
<div class="a" style="left:591px;top:171px;width:1px;height:50px;background:#404040;"></div>
<div class="a" style="left:592px;top:171px;width:16px;height:50px;background:#d4d0c8;"></div>
<div class="a" style="left:592px;top:171px;width:16px;height:1px;background:#ffffff;"></div>
<div class="a" style="left:592px;top:171px;width:1px;height:50px;background:#ffffff;"></div>
<div class="a" style="left:592px;top:220px;width:16px;height:1px;background:#404040;"></div>
<div class="a" style="left:607px;top:171px;width:1px;height:50px;background:#404040;"></div>
<div class="a" style="left:608px;top:171px;width:16px;height:50px;background:#d4d0c8;"></div>
<div class="a" style="left:608px;top:171px;width:16px;height:1px;background:#ffffff;"></div>
<div class="a" style="left:608px;top:171px;width:1px;height:50px;background:#ffffff;"></div>
<div class="a" style="left:608px;top:220px;width:16px;height:1px;background:#404040;"></div>
<div class="a" style="left:623px;top:171px;width:1px;height:50px;background:#404040;"></div>
<div class="a" style="left:624px;top:171px;width:16px;height:50px;background:#d4d0c8;"></div>
<div class="a" style="left:624px;top:171px;width:16px;height:1px;background:#ffffff;"></div>
<div class="a" style="left:624px;top:171px;width:1px;height:50px;background:#ffffff;"></div>
<div class="a" style="left:624px;top:220px;width:16px;height:1px;background:#404040;"></div>
<div class="a" style="left:639px;top:171px;width:1px;height:50px;background:#404040;"></div>
<div class="a" style="left:640px;top:171px;width:16px;height:50px;background:#d4d0c8;"></div>
<div class="a" style="left:640px;top:171px;width:16px;height:1px;background:#ffffff;"></div>
<div class="a" style="left:640px;top:171px;width:1px;height:50px;background:#ffffff;"></div>
<div class="a" style="left:640px;top:220px;width:16px;height:1px;background:#404040;"></div>
<div class="a" style="left:655px;top:171px;width:1px;height:50px;background:#404040;"></div>
<div class="a" style="left:656px;top:171px;width:16px;height:50px;background:#d4d0c8;"></div>
<div class="a" style="left:656px;top:171px;width:16px;height:1px;background:#ffffff;"></div>
<div class="a" style="left:656px;top:171px;width:1px;height:50px;background:#ffffff;"></div>
<div class="a" style="left:656px;top:220px;width:16px;height:1px;background:#404040;"></div>
<div class="a" style="left:671px;top:171px;width:1px;height:50px;background:#404040;"></div>
<div class="a" style="left:672px;top:171px;width:16px;height:50px;background:#d4d0c8;"></div>
<div class="a" style="left:672px;top:171px;width:16px;height:1px;background:#ffffff;"></div>
<div class="a" style="left:672px;top:171px;width:1px;height:50px;background:#ffffff;"></div>
<div class="a" style="left:672px;top:220px;width:16px;height:1px;background:#404040;"></div>
<div class="a" style="left:687px;top:171px;width:1px;height:50px;background:#404040;"></div>
<div class="a" style="left:688px;top:171px;width:16px;height:50px;background:#d4d0c8;"></div>
<div class="a" style="left:688px;top:171px;width:16px;height:1px;background:#ffffff;"></div>
<div class="a" style="left:688px;top:171px;width:1px;height:50px;background:#ffffff;"></div>
<div class="a" style="left:688px;top:220px;width:16px;height:1px;background:#404040;"></div>
<div class="a" style="left:703px;top:171px;width:1px;height:50px;background:#404040;"></div>
<div class="a" style="left:704px;top:171px;width:16px;height:50px;background:#d4d0c8;"></div>
<div class="a" style="left:704px;top:171px;width:16px;height:1px;background:#ffffff;"></div>
<div class="a" style="left:704px;top:171px;width:1px;height:50px;background:#ffffff;"></div>
<div class="a" style="left:704px;top:220px;width:16px;height:1px;background:#404040;"></div>
<div class="a" style="left:719px;top:171px;width:1px;height:50px;background:#404040;"></div>
<div class="a" style="left:720px;top:171px;width:16px;height:50px;background:#d4d0c8;"></div>
<div class="a" style="left:720px;top:171px;width:16px;height:1px;background:#ffffff;"></div>
<div class="a" style="left:720px;top:171px;width:1px;height:50px;background:#ffffff;"></div>
<div class="a" style="left:720px;top:220px;width:16px;height:1px;background:#404040;"></div>
<div class="a" style="left:735px;top:171px;width:1px;height:50px;background:#404040;"></div>
<div class="a" style="left:736px;top:171px;width:16px;height:50px;background:#d4d0c8;"></div>
<div class="a" style="left:736px;top:171px;width:16px;height:1px;background:#ffffff;"></div>
<div class="a" style="left:736px;top:171px;width:1px;height:50px;background:#ffffff;"></div>
<div class="a" style="left:736px;top:220px;width:16px;height:1px;background:#404040;"></div>
<div class="a" style="left:751px;top:171px;width:1px;height:50px;background:#404040;"></div>
<div class="a" style="left:752px;top:171px;width:16px;height:50px;background:#d4d0c8;"></div>
<div class="a" style="left:752px;top:171px;width:16px;height:1px;background:#ffffff;"></div>
<div class="a" style="left:752px;top:171px;width:1px;height:50px;background:#ffffff;"></div>
<div class="a" style="left:752px;top:220px;width:16px;height:1px;background:#404040;"></div>
<div class="a" style="left:767px;top:171px;width:1px;height:50px;background:#404040;"></div>
<div class="a" style="left:768px;top:171px;width:16px;height:50px;background:#d4d0c8;"></div>
<div class="a" style="left:768px;top:171px;width:16px;height:1px;background:#ffffff;"></div>
<div class="a" style="left:768px;top:171px;width:1px;height:50px;background:#ffffff;"></div>
<div class="a" style="left:768px;top:220px;width:16px;height:1px;background:#404040;"></div>
<div class="a" style="left:783px;top:171px;width:1px;height:50px;background:#404040;"></div>
<div class="a" style="left:784px;top:171px;width:16px;height:50px;background:#d4d0c8;"></div>
<div class="a" style="left:784px;top:171px;width:16px;height:1px;background:#ffffff;"></div>
<div class="a" style="left:784px;top:171px;width:1px;height:50px;background:#ffffff;"></div>
<div class="a" style="left:784px;top:220px;width:16px;height:1px;background:#404040;"></div>
<div class="a" style="left:799px;top:171px;width:1px;height:50px;background:#404040;"></div>
<div class="a" style="left:800px;top:171px;width:16px;height:50px;background:#d4d0c8;"></div>
<div class="a" style="left:800px;top:171px;width:16px;height:1px;background:#ffffff;"></div>
<div class="a" style="left:800px;top:171px;width:1px;height:50px;background:#ffffff;"></div>
<div class="a" style="left:800px;top:220px;width:16px;height:1px;background:#404040;"></div>
<div class="a" style="left:815px;top:171px;width:1px;height:50px;background:#404040;"></div>
<div class="a" style="left:816px;top:171px;width:16px;height:50px;background:#d4d0c8;"></div>
<div class="a" style="left:816px;top:171px;width:16px;height:1px;background:#ffffff;"></div>
<div class="a" style="left:816px;top:171px;width:1px;height:50px;background:#ffffff;"></div>
<div class="a" style="left:816px;top:220px;width:16px;height:1px;background:#404040;"></div>
<div class="a" style="left:831px;top:171px;width:1px;height:50px;background:#404040;"></div>
<div class="a" style="left:832px;top:171px;width:16px;height:50px;background:#d4d0c8;"></div>
<div class="a" style="left:832px;top:171px;width:16px;height:1px;background:#ffffff;"></div>
<div class="a" style="left:832px;top:171px;width:1px;height:50px;background:#ffffff;"></div>
<div class="a" style="left:832px;top:220px;width:16px;height:1px;background:#404040;"></div>
<div class="a" style="left:847px;top:171px;width:1px;height:50px;background:#404040;"></div>
<div class="a" style="left:848px;top:171px;width:16px;height:50px;background:#d4d0c8;"></div>
<div class="a" style="left:848px;top:171px;width:16px;height:1px;background:#ffffff;"></div>
<div class="a" style="left:848px;top:171px;width:1px;height:50px;background:#ffffff;"></div>
<div class="a" style="left:848px;top:220px;width:16px;height:1px;background:#404040;"></div>
<div class="a" style="left:863px;top:171px;width:1px;height:50px;background:#404040;"></div>
<div class="a" style="left:480px;top:221px;width:384px;height:315px;background:#d4d0c8;"></div>
<div class="a" style="left:480px;top:221px;width:15px;height:44px;background:#fff;"></div>
<div class="a" style="left:480px;top:266px;width:15px;height:44px;background:#fff;"></div>
<div class="a" style="left:480px;top:311px;width:15px;height:44px;background:#fff;"></div>
<div class="a" style="left:480px;top:356px;width:15px;height:44px;background:#fff;"></div>
<div class="a" style="left:480px;top:401px;width:15px;height:44px;background:#fff;"></div>
<div class="a" style="left:480px;top:446px;width:15px;height:44px;background:#fff;"></div>
<div class="a" style="left:480px;top:491px;width:15px;height:44px;background:#fff;"></div>
<div class="a" style="left:496px;top:221px;width:15px;height:44px;background:#fff;"></div>
<div class="a" style="left:496px;top:266px;width:15px;height:44px;background:#fff;"></div>
<div class="a" style="left:496px;top:311px;width:15px;height:44px;background:#fff;"></div>
<div class="a" style="left:496px;top:356px;width:15px;height:44px;background:#fff;"></div>
<div class="a" style="left:496px;top:401px;width:15px;height:44px;background:#fff;"></div>
<div class="a" style="left:496px;top:446px;width:15px;height:44px;background:#fff;"></div>
<div class="a" style="left:496px;top:491px;width:15px;height:44px;background:#fff;"></div>
<div class="a" style="left:512px;top:221px;width:15px;height:44px;background:#fff;"></div>
<div class="a" style="left:512px;top:266px;width:15px;height:44px;background:#fff;"></div>
<div class="a" style="left:512px;top:311px;width:15px;height:44px;background:#fff;"></div>
<div class="a" style="left:512px;top:356px;width:15px;height:44px;background:#fff;"></div>
<div class="a" style="left:512px;top:401px;width:15px;height:44px;background:#fff;"></div>
<div class="a" style="left:512px;top:446px;width:15px;height:44px;background:#fff;"></div>
<div class="a" style="left:512px;top:491px;width:15px;height:44px;background:#fff;"></div>
<div class="a" style="left:528px;top:221px;width:15px;height:44px;background:#0000ff;"></div>
<div class="a" style="left:528px;top:266px;width:15px;height:44px;background:#0000ff;"></div>
<div class="a" style="left:528px;top:311px;width:15px;height:44px;background:#0000ff;"></div>
<div class="a" style="left:528px;top:356px;width:15px;height:44px;background:#0000ff;"></div>
<div class="a" style="left:528px;top:401px;width:15px;height:44px;background:#0000ff;"></div>
<div class="a" style="left:528px;top:446px;width:15px;height:44px;background:#0000ff;"></div>
<div class="a" style="left:528px;top:491px;width:15px;height:44px;background:#0000ff;"></div>
<div class="a" style="left:544px;top:221px;width:15px;height:44px;background:#0000ff;"></div>
<div class="a" style="left:544px;top:266px;width:15px;height:44px;background:#0000ff;"></div>
<div class="a" style="left:544px;top:311px;width:15px;height:44px;background:#0000ff;"></div>
<div class="a" style="left:544px;top:356px;width:15px;height:44px;background:#0000ff;"></div>
<div class="a" style="left:544px;top:401px;width:15px;height:44px;background:#0000ff;"></div>
<div class="a" style="left:544px;top:446px;width:15px;height:44px;background:#0000ff;"></div>
<div class="a" style="left:544px;top:491px;width:15px;height:44px;background:#0000ff;"></div>
<div class="a" style="left:560px;top:221px;width:15px;height:44px;background:#0000ff;"></div>
<div class="a" style="left:560px;top:266px;width:15px;height:44px;background:#0000ff;"></div>
<div class="a" style="left:560px;top:311px;width:15px;height:44px;background:#0000ff;"></div>
<div class="a" style="left:560px;top:356px;width:15px;height:44px;background:#0000ff;"></div>
<div class="a" style="left:560px;top:401px;width:15px;height:44px;background:#0000ff;"></div>
<div class="a" style="left:560px;top:446px;width:15px;height:44px;background:#0000ff;"></div>
<div class="a" style="left:560px;top:491px;width:15px;height:44px;background:#0000ff;"></div>
<div class="a" style="left:576px;top:221px;width:15px;height:44px;background:#0000ff;"></div>
<div class="a" style="left:576px;top:266px;width:15px;height:44px;background:#0000ff;"></div>
<div class="a" style="left:576px;top:311px;width:15px;height:44px;background:#0000ff;"></div>
<div class="a" style="left:576px;top:356px;width:15px;height:44px;background:#0000ff;"></div>
<div class="a" style="left:576px;top:401px;width:15px;height:44px;background:#0000ff;"></div>
<div class="a" style="left:576px;top:446px;width:15px;height:44px;background:#0000ff;"></div>
<div class="a" style="left:576px;top:491px;width:15px;height:44px;background:#0000ff;"></div>
<div class="a" style="left:592px;top:221px;width:15px;height:44px;background:#0000ff;"></div>
<div class="a" style="left:592px;top:266px;width:15px;height:44px;background:#0000ff;"></div>
<div class="a" style="left:592px;top:311px;width:15px;height:44px;background:#0000ff;"></div>
<div class="a" style="left:592px;top:356px;width:15px;height:44px;background:#0000ff;"></div>
<div class="a" style="left:592px;top:401px;width:15px;height:44px;background:#0000ff;"></div>
<div class="a" style="left:592px;top:446px;width:15px;height:44px;background:#0000ff;"></div>
<div class="a" style="left:592px;top:491px;width:15px;height:44px;background:#0000ff;"></div>
<div class="a" style="left:608px;top:221px;width:15px;height:44px;background:#0000ff;"></div>
<div class="a" style="left:608px;top:266px;width:15px;height:44px;background:#0000ff;"></div>
<div class="a" style="left:608px;top:311px;width:15px;height:44px;background:#0000ff;"></div>
<div class="a" style="left:608px;top:356px;width:15px;height:44px;background:#0000ff;"></div>
<div class="a" style="left:608px;top:401px;width:15px;height:44px;background:#0000ff;"></div>
<div class="a" style="left:608px;top:446px;width:15px;height:44px;background:#0000ff;"></div>
<div class="a" style="left:608px;top:491px;width:15px;height:44px;background:#0000ff;"></div>
<div class="a" style="left:624px;top:221px;width:15px;height:44px;background:#0000ff;"></div>
<div class="a" style="left:624px;top:266px;width:15px;height:44px;background:#0000ff;"></div>
<div class="a" style="left:624px;top:311px;width:15px;height:44px;background:#0000ff;"></div>
<div class="a" style="left:624px;top:356px;width:15px;height:44px;background:#0000ff;"></div>
<div class="a" style="left:624px;top:401px;width:15px;height:44px;background:#0000ff;"></div>
<div class="a" style="left:624px;top:446px;width:15px;height:44px;background:#0000ff;"></div>
<div class="a" style="left:624px;top:491px;width:15px;height:44px;background:#0000ff;"></div>
<div class="a" style="left:640px;top:221px;width:15px;height:44px;background:#0000ff;"></div>
<div class="a" style="left:640px;top:266px;width:15px;height:44px;background:#0000ff;"></div>
<div class="a" style="left:640px;top:311px;width:15px;height:44px;background:#0000ff;"></div>
<div class="a" style="left:640px;top:356px;width:15px;height:44px;background:#0000ff;"></div>
<div class="a" style="left:640px;top:401px;width:15px;height:44px;background:#0000ff;"></div>
<div class="a" style="left:640px;top:446px;width:15px;height:44px;background:#0000ff;"></div>
<div class="a" style="left:640px;top:491px;width:15px;height:44px;background:#0000ff;"></div>
<div class="a" style="left:656px;top:221px;width:15px;height:44px;background:#fff;"></div>
<div class="a" style="left:656px;top:266px;width:15px;height:44px;background:#fff;"></div>
<div class="a" style="left:656px;top:311px;width:15px;height:44px;background:#fff;"></div>
<div class="a" style="left:656px;top:356px;width:15px;height:44px;background:#fff;"></div>
<div class="a" style="left:656px;top:401px;width:15px;height:44px;background:#fff;"></div>
<div class="a" style="left:656px;top:446px;width:15px;height:44px;background:#fff;"></div>
<div class="a" style="left:656px;top:491px;width:15px;height:44px;background:#fff;"></div>
<div class="a" style="left:672px;top:221px;width:15px;height:44px;background:#fff;"></div>
<div class="a" style="left:672px;top:266px;width:15px;height:44px;background:#fff;"></div>
<div class="a" style="left:672px;top:311px;width:15px;height:44px;background:#fff;"></div>
<div class="a" style="left:672px;top:356px;width:15px;height:44px;background:#fff;"></div>
<div class="a" style="left:672px;top:401px;width:15px;height:44px;background:#fff;"></div>
<div class="a" style="left:672px;top:446px;width:15px;height:44px;background:#fff;"></div>
<div class="a" style="left:672px;top:491px;width:15px;height:44px;background:#fff;"></div>
<div class="a" style="left:688px;top:221px;width:15px;height:44px;background:#0000ff;"></div>
<div class="a" style="left:688px;top:266px;width:15px;height:44px;background:#0000ff;"></div>
<div class="a" style="left:688px;top:311px;width:15px;height:44px;background:#0000ff;"></div>
<div class="a" style="left:688px;top:356px;width:15px;height:44px;background:#0000ff;"></div>
<div class="a" style="left:688px;top:401px;width:15px;height:44px;background:#0000ff;"></div>
<div class="a" style="left:688px;top:446px;width:15px;height:44px;background:#0000ff;"></div>
<div class="a" style="left:688px;top:491px;width:15px;height:44px;background:#0000ff;"></div>
<div class="a" style="left:704px;top:221px;width:15px;height:44px;background:#0000ff;"></div>
<div class="a" style="left:704px;top:266px;width:15px;height:44px;background:#0000ff;"></div>
<div class="a" style="left:704px;top:311px;width:15px;height:44px;background:#0000ff;"></div>
<div class="a" style="left:704px;top:356px;width:15px;height:44px;background:#0000ff;"></div>
<div class="a" style="left:704px;top:401px;width:15px;height:44px;background:#0000ff;"></div>
<div class="a" style="left:704px;top:446px;width:15px;height:44px;background:#0000ff;"></div>
<div class="a" style="left:704px;top:491px;width:15px;height:44px;background:#0000ff;"></div>
<div class="a" style="left:720px;top:221px;width:15px;height:44px;background:#0000ff;"></div>
<div class="a" style="left:720px;top:266px;width:15px;height:44px;background:#0000ff;"></div>
<div class="a" style="left:720px;top:311px;width:15px;height:44px;background:#0000ff;"></div>
<div class="a" style="left:720px;top:356px;width:15px;height:44px;background:#0000ff;"></div>
<div class="a" style="left:720px;top:401px;width:15px;height:44px;background:#0000ff;"></div>
<div class="a" style="left:720px;top:446px;width:15px;height:44px;background:#0000ff;"></div>
<div class="a" style="left:720px;top:491px;width:15px;height:44px;background:#0000ff;"></div>
<div class="a" style="left:736px;top:221px;width:15px;height:44px;background:#0000ff;"></div>
<div class="a" style="left:736px;top:266px;width:15px;height:44px;background:#0000ff;"></div>
<div class="a" style="left:736px;top:311px;width:15px;height:44px;background:#0000ff;"></div>
<div class="a" style="left:736px;top:356px;width:15px;height:44px;background:#0000ff;"></div>
<div class="a" style="left:736px;top:401px;width:15px;height:44px;background:#0000ff;"></div>
<div class="a" style="left:736px;top:446px;width:15px;height:44px;background:#0000ff;"></div>
<div class="a" style="left:736px;top:491px;width:15px;height:44px;background:#0000ff;"></div>
<div class="a" style="left:752px;top:221px;width:15px;height:44px;background:#0000ff;"></div>
<div class="a" style="left:752px;top:266px;width:15px;height:44px;background:#0000ff;"></div>
<div class="a" style="left:752px;top:311px;width:15px;height:44px;background:#0000ff;"></div>
<div class="a" style="left:752px;top:356px;width:15px;height:44px;background:#0000ff;"></div>
<div class="a" style="left:752px;top:401px;width:15px;height:44px;background:#0000ff;"></div>
<div class="a" style="left:752px;top:446px;width:15px;height:44px;background:#0000ff;"></div>
<div class="a" style="left:752px;top:491px;width:15px;height:44px;background:#0000ff;"></div>
<div class="a" style="left:768px;top:221px;width:15px;height:44px;background:#0000ff;"></div>
<div class="a" style="left:768px;top:266px;width:15px;height:44px;background:#0000ff;"></div>
<div class="a" style="left:768px;top:311px;width:15px;height:44px;background:#0000ff;"></div>
<div class="a" style="left:768px;top:356px;width:15px;height:44px;background:#0000ff;"></div>
<div class="a" style="left:768px;top:401px;width:15px;height:44px;background:#0000ff;"></div>
<div class="a" style="left:768px;top:446px;width:15px;height:44px;background:#0000ff;"></div>
<div class="a" style="left:768px;top:491px;width:15px;height:44px;background:#0000ff;"></div>
<div class="a" style="left:784px;top:221px;width:15px;height:44px;background:#0000ff;"></div>
<div class="a" style="left:784px;top:266px;width:15px;height:44px;background:#0000ff;"></div>
<div class="a" style="left:784px;top:311px;width:15px;height:44px;background:#0000ff;"></div>
<div class="a" style="left:784px;top:356px;width:15px;height:44px;background:#0000ff;"></div>
<div class="a" style="left:784px;top:401px;width:15px;height:44px;background:#0000ff;"></div>
<div class="a" style="left:784px;top:446px;width:15px;height:44px;background:#0000ff;"></div>
<div class="a" style="left:784px;top:491px;width:15px;height:44px;background:#0000ff;"></div>
<div class="a" style="left:800px;top:221px;width:15px;height:44px;background:#0000ff;"></div>
<div class="a" style="left:800px;top:266px;width:15px;height:44px;background:#0000ff;"></div>
<div class="a" style="left:800px;top:311px;width:15px;height:44px;background:#0000ff;"></div>
<div class="a" style="left:800px;top:356px;width:15px;height:44px;background:#0000ff;"></div>
<div class="a" style="left:800px;top:401px;width:15px;height:44px;background:#0000ff;"></div>
<div class="a" style="left:800px;top:446px;width:15px;height:44px;background:#0000ff;"></div>
<div class="a" style="left:800px;top:491px;width:15px;height:44px;background:#0000ff;"></div>
<div class="a" style="left:816px;top:221px;width:15px;height:44px;background:#0000ff;"></div>
<div class="a" style="left:816px;top:266px;width:15px;height:44px;background:#0000ff;"></div>
<div class="a" style="left:816px;top:311px;width:15px;height:44px;background:#0000ff;"></div>
<div class="a" style="left:816px;top:356px;width:15px;height:44px;background:#0000ff;"></div>
<div class="a" style="left:816px;top:401px;width:15px;height:44px;background:#0000ff;"></div>
<div class="a" style="left:816px;top:446px;width:15px;height:44px;background:#0000ff;"></div>
<div class="a" style="left:816px;top:491px;width:15px;height:44px;background:#0000ff;"></div>
<div class="a" style="left:832px;top:221px;width:15px;height:44px;background:#0000ff;"></div>
<div class="a" style="left:832px;top:266px;width:15px;height:44px;background:#0000ff;"></div>
<div class="a" style="left:832px;top:311px;width:15px;height:44px;background:#0000ff;"></div>
<div class="a" style="left:832px;top:356px;width:15px;height:44px;background:#0000ff;"></div>
<div class="a" style="left:832px;top:401px;width:15px;height:44px;background:#0000ff;"></div>
<div class="a" style="left:832px;top:446px;width:15px;height:44px;background:#0000ff;"></div>
<div class="a" style="left:832px;top:491px;width:15px;height:44px;background:#0000ff;"></div>
<div class="a" style="left:848px;top:221px;width:15px;height:44px;background:#0000ff;"></div>
<div class="a" style="left:848px;top:266px;width:15px;height:44px;background:#0000ff;"></div>
<div class="a" style="left:848px;top:311px;width:15px;height:44px;background:#0000ff;"></div>
<div class="a" style="left:848px;top:356px;width:15px;height:44px;background:#0000ff;"></div>
<div class="a" style="left:848px;top:401px;width:15px;height:44px;background:#0000ff;"></div>
<div class="a" style="left:848px;top:446px;width:15px;height:44px;background:#0000ff;"></div>
<div class="a" style="left:848px;top:491px;width:15px;height:44px;background:#0000ff;"></div>
<div class="a" style="left:657px;top:222px;width:29px;height:312px;background:#fff;"></div>
<div class="a" style="left:671px;top:223px;width:1px;height:310px;background:#d4d0c8;"></div>
<div class="a" style="left:658px;top:265px;width:27px;height:1px;background:#d4d0c8;"></div>
<div class="a" style="left:658px;top:310px;width:27px;height:1px;background:#d4d0c8;"></div>
<div class="a" style="left:658px;top:355px;width:27px;height:1px;background:#d4d0c8;"></div>
<div class="a" style="left:658px;top:400px;width:27px;height:1px;background:#d4d0c8;"></div>
<div class="a" style="left:658px;top:445px;width:27px;height:1px;background:#d4d0c8;"></div>
<div class="a" style="left:658px;top:490px;width:27px;height:1px;background:#d4d0c8;"></div>
<div class="a" style="left:655px;top:220px;width:33px;height:316px;box-sizing:border-box;border:2px solid #000;"></div>
<div class="t c" style="left:431px;width:400px;text-align:center;top:539px;">Понедельник по Воскресенье с 11:00 до 13:00</div>
<div class="a" style="left:530px;top:559px;width:10px;height:10px;background:#0000ff;box-sizing:border-box;border:1px solid #000;"></div>
<div class="t" style="left:542px;top:557px;">- Время аудита</div>
<div class="a" style="left:623px;top:559px;width:10px;height:10px;background:#fff;box-sizing:border-box;border:1px solid #000;"></div>
<div class="t" style="left:635px;top:557px;">- Время без аудита</div>
<div class="a" style="left:653px;top:626px;width:75px;height:23px;background:#000;"></div>
<div class="a" style="left:654px;top:627px;width:73px;height:21px;background:#d4d0c8;"></div>
<div class="a" style="left:654px;top:627px;width:73px;height:1px;background:#ffffff;"></div>
<div class="a" style="left:654px;top:627px;width:1px;height:21px;background:#ffffff;"></div>
<div class="a" style="left:654px;top:647px;width:73px;height:1px;background:#404040;"></div>
<div class="a" style="left:726px;top:627px;width:1px;height:21px;background:#404040;"></div>
<div class="a" style="left:655px;top:646px;width:71px;height:1px;background:#808080;"></div>
<div class="a" style="left:725px;top:628px;width:1px;height:19px;background:#808080;"></div>
<div class="t c" style="left:490px;width:400px;text-align:center;top:631px;">OK</div>
<div class="a" style="left:734px;top:626px;width:75px;height:23px;background:#d4d0c8;"></div>
<div class="a" style="left:734px;top:626px;width:75px;height:1px;background:#ffffff;"></div>
<div class="a" style="left:734px;top:626px;width:1px;height:23px;background:#ffffff;"></div>
<div class="a" style="left:734px;top:648px;width:75px;height:1px;background:#404040;"></div>
<div class="a" style="left:808px;top:626px;width:1px;height:23px;background:#404040;"></div>
<div class="a" style="left:735px;top:647px;width:73px;height:1px;background:#808080;"></div>
<div class="a" style="left:807px;top:627px;width:1px;height:21px;background:#808080;"></div>
<div class="t c" style="left:571px;width:400px;text-align:center;top:631px;">Отмена</div>
<div class="a" style="left:815px;top:626px;width:75px;height:23px;background:#d4d0c8;"></div>
<div class="a" style="left:815px;top:626px;width:75px;height:1px;background:#ffffff;"></div>
<div class="a" style="left:815px;top:626px;width:1px;height:23px;background:#ffffff;"></div>
<div class="a" style="left:815px;top:648px;width:75px;height:1px;background:#404040;"></div>
<div class="a" style="left:889px;top:626px;width:1px;height:23px;background:#404040;"></div>
<div class="a" style="left:816px;top:647px;width:73px;height:1px;background:#808080;"></div>
<div class="a" style="left:888px;top:627px;width:1px;height:21px;background:#808080;"></div>
<div class="t c" style="left:652px;width:400px;text-align:center;top:631px;">Применить</div>
</body></html>
